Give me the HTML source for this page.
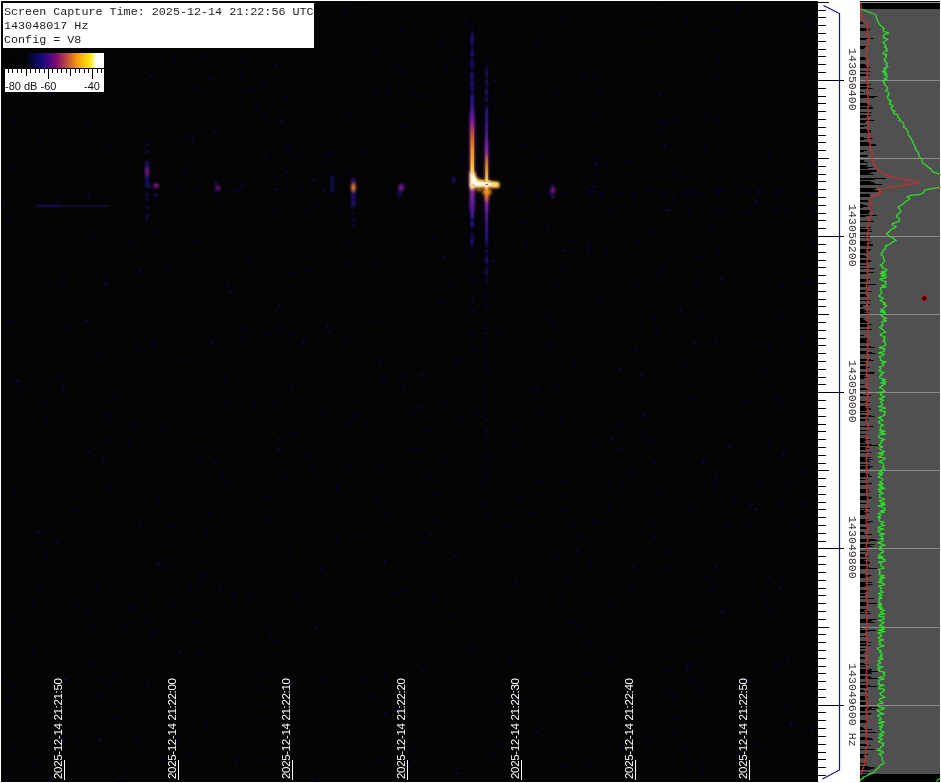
<!DOCTYPE html>
<html><head><meta charset="utf-8"><title>Spectrum capture</title>
<style>
html,body{margin:0;padding:0;background:#fff;}
#root{position:relative;width:941px;height:783px;overflow:hidden;background:#fff;}
#gfx{position:absolute;left:0;top:0;}
.hdr{position:absolute;left:3px;top:3px;width:311px;height:45px;background:#fff;color:#1c1c1c;
 font-family:"Liberation Mono",monospace;font-size:11px;line-height:14px;white-space:pre;}
.hdr div{position:absolute;left:1.3px;height:14px;transform-origin:0 0;transform:scaleX(1.066);}
.sc{position:absolute;font-family:"Liberation Sans",sans-serif;font-size:11px;line-height:11px;color:#111;white-space:pre;}
.fl{position:absolute;font-family:"Liberation Mono",monospace;font-size:11.5px;line-height:12px;color:#3a3236;white-space:pre;
 transform-origin:0 0;transform:rotate(90deg) scaleX(1.01);}
.tl{position:absolute;font-family:"Liberation Sans",sans-serif;font-size:11.5px;line-height:12px;color:#fff;white-space:pre;
 transform-origin:0 0;transform:rotate(-90deg);letter-spacing:-0.33px;}
</style></head><body><div id="root">

<svg id="gfx" width="941" height="783" viewBox="0 0 941 783">
<defs>
<linearGradient id="pal" x1="0" y1="0" x2="1" y2="0">
<stop offset="0" stop-color="#030303"/><stop offset="0.21" stop-color="#040407"/><stop offset="0.35" stop-color="#0c0a70"/>
<stop offset="0.43" stop-color="#3a0880"/><stop offset="0.52" stop-color="#820a72"/><stop offset="0.63" stop-color="#c0503a"/>
<stop offset="0.73" stop-color="#fb9a0c"/><stop offset="0.84" stop-color="#ffe00c"/><stop offset="0.885" stop-color="#ffee60"/><stop offset="0.92" stop-color="#ffffff"/><stop offset="1" stop-color="#ffffff"/>
</linearGradient>
<filter id="b0" x="-50%" y="-50%" width="200%" height="200%"><feGaussianBlur stdDeviation="0.8"/></filter>
<filter id="b1" x="-50%" y="-50%" width="200%" height="200%"><feGaussianBlur stdDeviation="0.8"/></filter>
<filter id="b2" x="-100%" y="-100%" width="300%" height="300%"><feGaussianBlur stdDeviation="1.5"/></filter>
<filter id="b3" x="-150%" y="-10%" width="400%" height="120%"><feGaussianBlur stdDeviation="1.3 2"/></filter>
<filter id="b4" x="-150%" y="-10%" width="400%" height="120%"><feGaussianBlur stdDeviation="0.7 1.5"/></filter>
<filter id="b5" x="-50%" y="-50%" width="200%" height="200%"><feGaussianBlur stdDeviation="0.55"/></filter>
<filter id="b6" x="-50%" y="-50%" width="200%" height="200%"><feGaussianBlur stdDeviation="0.9"/></filter>
<linearGradient id="l1" x1="0" y1="26" x2="0" y2="250" gradientUnits="userSpaceOnUse"><stop offset="0.0000" stop-color="#141060" stop-opacity="0"/><stop offset="0.0357" stop-color="#141060" stop-opacity="0.9"/><stop offset="0.3304" stop-color="#1c1278"/><stop offset="0.3839" stop-color="#4a1490"/><stop offset="0.4375" stop-color="#8a2490"/><stop offset="0.4821" stop-color="#c8502c"/><stop offset="0.5536" stop-color="#f09020"/><stop offset="0.6205" stop-color="#ffb428"/><stop offset="0.6518" stop-color="#ffe070"/><stop offset="0.6696" stop-color="#ffffff"/><stop offset="0.7188" stop-color="#ffffff"/><stop offset="0.7299" stop-color="#8a2490"/><stop offset="0.7946" stop-color="#5a1a98"/><stop offset="0.8661" stop-color="#241280"/><stop offset="0.9688" stop-color="#141060" stop-opacity="0.9"/><stop offset="1.0000" stop-color="#141060" stop-opacity="0"/></linearGradient>
<linearGradient id="l2" x1="0" y1="60" x2="0" y2="286" gradientUnits="userSpaceOnUse"><stop offset="0.0000" stop-color="#141060" stop-opacity="0"/><stop offset="0.0442" stop-color="#141060" stop-opacity="0.8"/><stop offset="0.2655" stop-color="#2a1286"/><stop offset="0.3540" stop-color="#5a1a98"/><stop offset="0.4071" stop-color="#8a2490"/><stop offset="0.4469" stop-color="#d06a24"/><stop offset="0.4956" stop-color="#f59a20"/><stop offset="0.5310" stop-color="#ffd050"/><stop offset="0.5487" stop-color="#ffffff"/><stop offset="0.5619" stop-color="#ffffff"/><stop offset="0.5752" stop-color="#ffa020"/><stop offset="0.6062" stop-color="#e07818"/><stop offset="0.6283" stop-color="#8a2490"/><stop offset="0.6858" stop-color="#4a1490"/><stop offset="0.7743" stop-color="#1c1278"/><stop offset="0.9646" stop-color="#141060" stop-opacity="0.8"/><stop offset="1.0000" stop-color="#141060" stop-opacity="0"/></linearGradient>
</defs>
<rect x="0" y="0" width="941" height="783" fill="#fff"/>
<rect x="1" y="1" width="817" height="781" fill="#040405"/>
<g fill="#0e0b66" filter="url(#b0)"><rect x="702" y="106" width="2" height="1" opacity="0.22"/><rect x="555" y="519" width="2" height="2" opacity="0.22"/><rect x="574" y="362" width="2" height="2" opacity="0.79"/><rect x="82" y="229" width="2" height="1" opacity="0.66"/><rect x="36" y="34" width="2" height="2" opacity="0.33"/><rect x="249" y="299" width="1" height="2" opacity="0.61"/><rect x="768" y="442" width="2" height="2" opacity="0.67"/><rect x="210" y="341" width="3" height="2" opacity="0.81"/><rect x="94" y="596" width="2" height="1" opacity="0.77"/><rect x="478" y="544" width="2" height="1" opacity="0.22"/><rect x="262" y="607" width="2" height="1" opacity="0.47"/><rect x="607" y="779" width="3" height="1" opacity="0.38"/><rect x="76" y="738" width="2" height="2" opacity="0.80"/><rect x="565" y="577" width="2" height="1" opacity="0.64"/><rect x="170" y="526" width="2" height="2" opacity="0.70"/><rect x="38" y="549" width="3" height="2" opacity="0.31"/><rect x="136" y="610" width="2" height="2" opacity="0.36"/><rect x="51" y="281" width="2" height="1" opacity="0.33"/><rect x="255" y="109" width="2" height="2" opacity="0.35"/><rect x="199" y="403" width="2" height="1" opacity="0.81"/><rect x="288" y="236" width="2" height="1" opacity="0.42"/><rect x="665" y="429" width="2" height="1" opacity="0.59"/><rect x="377" y="598" width="2" height="1" opacity="0.65"/><rect x="13" y="381" width="1" height="1" opacity="0.78"/><rect x="250" y="89" width="2" height="2" opacity="0.83"/><rect x="134" y="349" width="3" height="2" opacity="0.39"/><rect x="456" y="38" width="2" height="2" opacity="0.25"/><rect x="585" y="765" width="3" height="2" opacity="0.27"/><rect x="400" y="340" width="2" height="2" opacity="0.21"/><rect x="750" y="504" width="3" height="2" opacity="0.62"/><rect x="66" y="584" width="1" height="2" opacity="0.75"/><rect x="244" y="147" width="3" height="1" opacity="0.27"/><rect x="587" y="244" width="3" height="2" opacity="0.45"/><rect x="529" y="280" width="2" height="2" opacity="0.29"/><rect x="750" y="654" width="2" height="1" opacity="0.24"/><rect x="90" y="627" width="2" height="1" opacity="0.81"/><rect x="404" y="391" width="2" height="2" opacity="0.59"/><rect x="512" y="113" width="2" height="1" opacity="0.29"/><rect x="520" y="315" width="1" height="2" opacity="0.51"/><rect x="180" y="292" width="1" height="2" opacity="0.29"/><rect x="61" y="46" width="2" height="2" opacity="0.24"/><rect x="10" y="746" width="2" height="1" opacity="0.45"/><rect x="6" y="628" width="2" height="1" opacity="0.50"/><rect x="444" y="405" width="2" height="1" opacity="0.83"/><rect x="784" y="485" width="1" height="2" opacity="0.60"/><rect x="244" y="447" width="2" height="2" opacity="0.63"/><rect x="114" y="675" width="3" height="1" opacity="0.75"/><rect x="184" y="578" width="1" height="1" opacity="0.63"/><rect x="305" y="454" width="2" height="2" opacity="0.54"/><rect x="462" y="311" width="1" height="1" opacity="0.32"/><rect x="726" y="429" width="1" height="1" opacity="0.76"/><rect x="209" y="77" width="3" height="2" opacity="0.66"/><rect x="187" y="359" width="3" height="1" opacity="0.68"/><rect x="741" y="443" width="2" height="1" opacity="0.72"/><rect x="112" y="394" width="3" height="1" opacity="0.61"/><rect x="783" y="403" width="2" height="2" opacity="0.55"/><rect x="789" y="152" width="2" height="1" opacity="0.29"/><rect x="633" y="48" width="2" height="1" opacity="0.44"/><rect x="15" y="465" width="2" height="2" opacity="0.39"/><rect x="577" y="334" width="1" height="1" opacity="0.57"/><rect x="748" y="680" width="2" height="2" opacity="0.68"/><rect x="280" y="596" width="1" height="2" opacity="0.28"/><rect x="306" y="576" width="2" height="2" opacity="0.23"/><rect x="493" y="80" width="3" height="2" opacity="0.72"/><rect x="95" y="722" width="2" height="2" opacity="0.43"/><rect x="566" y="20" width="3" height="2" opacity="0.27"/><rect x="20" y="89" width="2" height="1" opacity="0.30"/><rect x="759" y="682" width="2" height="1" opacity="0.58"/><rect x="206" y="778" width="2" height="2" opacity="0.21"/><rect x="281" y="120" width="3" height="2" opacity="0.77"/><rect x="653" y="31" width="2" height="2" opacity="0.75"/><rect x="789" y="541" width="2" height="2" opacity="0.35"/><rect x="781" y="405" width="2" height="2" opacity="0.54"/><rect x="256" y="105" width="3" height="1" opacity="0.34"/><rect x="668" y="568" width="2" height="2" opacity="0.45"/><rect x="290" y="8" width="3" height="2" opacity="0.42"/><rect x="20" y="360" width="3" height="1" opacity="0.61"/><rect x="593" y="115" width="2" height="2" opacity="0.24"/><rect x="808" y="280" width="3" height="1" opacity="0.84"/><rect x="31" y="439" width="1" height="1" opacity="0.70"/><rect x="517" y="496" width="2" height="2" opacity="0.72"/><rect x="196" y="622" width="2" height="1" opacity="0.40"/><rect x="623" y="578" width="3" height="1" opacity="0.43"/><rect x="450" y="318" width="1" height="2" opacity="0.64"/><rect x="721" y="611" width="3" height="2" opacity="0.78"/><rect x="660" y="777" width="2" height="1" opacity="0.33"/><rect x="725" y="525" width="2" height="2" opacity="0.46"/><rect x="630" y="725" width="3" height="1" opacity="0.29"/><rect x="588" y="199" width="3" height="2" opacity="0.25"/><rect x="157" y="722" width="3" height="1" opacity="0.40"/><rect x="290" y="367" width="2" height="1" opacity="0.75"/><rect x="262" y="139" width="2" height="1" opacity="0.69"/><rect x="512" y="187" width="1" height="1" opacity="0.23"/><rect x="367" y="697" width="2" height="1" opacity="0.33"/><rect x="599" y="751" width="3" height="1" opacity="0.25"/><rect x="660" y="683" width="2" height="1" opacity="0.20"/><rect x="223" y="502" width="1" height="2" opacity="0.80"/><rect x="175" y="257" width="1" height="2" opacity="0.46"/><rect x="554" y="265" width="1" height="2" opacity="0.72"/><rect x="74" y="479" width="2" height="2" opacity="0.37"/><rect x="379" y="14" width="2" height="2" opacity="0.24"/><rect x="502" y="566" width="2" height="1" opacity="0.26"/><rect x="130" y="114" width="1" height="2" opacity="0.73"/><rect x="347" y="422" width="3" height="1" opacity="0.63"/><rect x="491" y="260" width="3" height="2" opacity="0.73"/><rect x="391" y="28" width="2" height="2" opacity="0.56"/><rect x="296" y="415" width="2" height="1" opacity="0.36"/><rect x="456" y="81" width="2" height="1" opacity="0.84"/><rect x="188" y="591" width="1" height="1" opacity="0.61"/><rect x="102" y="425" width="2" height="1" opacity="0.37"/><rect x="495" y="576" width="2" height="1" opacity="0.54"/><rect x="288" y="554" width="2" height="2" opacity="0.34"/><rect x="744" y="703" width="2" height="2" opacity="0.34"/><rect x="644" y="24" width="1" height="1" opacity="0.72"/><rect x="745" y="527" width="2" height="1" opacity="0.35"/><rect x="308" y="708" width="2" height="1" opacity="0.22"/><rect x="20" y="554" width="2" height="1" opacity="0.43"/><rect x="268" y="334" width="2" height="2" opacity="0.77"/><rect x="408" y="766" width="2" height="2" opacity="0.76"/><rect x="709" y="211" width="2" height="2" opacity="0.38"/><rect x="272" y="380" width="2" height="1" opacity="0.41"/><rect x="499" y="746" width="2" height="1" opacity="0.77"/><rect x="173" y="690" width="2" height="1" opacity="0.71"/><rect x="704" y="145" width="2" height="2" opacity="0.65"/><rect x="657" y="121" width="1" height="1" opacity="0.79"/><rect x="125" y="575" width="1" height="1" opacity="0.50"/><rect x="326" y="325" width="2" height="2" opacity="0.84"/><rect x="30" y="185" width="1" height="1" opacity="0.29"/><rect x="486" y="450" width="1" height="1" opacity="0.23"/><rect x="729" y="53" width="1" height="1" opacity="0.82"/><rect x="791" y="411" width="1" height="1" opacity="0.35"/><rect x="442" y="495" width="3" height="1" opacity="0.54"/><rect x="685" y="747" width="1" height="2" opacity="0.83"/><rect x="696" y="758" width="2" height="1" opacity="0.38"/><rect x="147" y="209" width="1" height="1" opacity="0.33"/><rect x="42" y="616" width="2" height="2" opacity="0.21"/><rect x="562" y="510" width="3" height="2" opacity="0.56"/><rect x="564" y="766" width="2" height="2" opacity="0.47"/><rect x="441" y="301" width="2" height="2" opacity="0.69"/><rect x="719" y="628" width="1" height="1" opacity="0.60"/><rect x="755" y="201" width="3" height="2" opacity="0.84"/><rect x="673" y="518" width="1" height="1" opacity="0.79"/><rect x="43" y="542" width="2" height="2" opacity="0.56"/><rect x="259" y="758" width="1" height="2" opacity="0.69"/><rect x="696" y="399" width="3" height="2" opacity="0.35"/><rect x="514" y="581" width="2" height="2" opacity="0.66"/><rect x="323" y="412" width="3" height="2" opacity="0.25"/><rect x="650" y="519" width="3" height="2" opacity="0.37"/><rect x="686" y="669" width="2" height="2" opacity="0.57"/><rect x="815" y="54" width="3" height="2" opacity="0.54"/><rect x="431" y="635" width="2" height="1" opacity="0.30"/><rect x="540" y="141" width="1" height="2" opacity="0.45"/><rect x="679" y="638" width="1" height="2" opacity="0.30"/><rect x="207" y="83" width="2" height="2" opacity="0.49"/><rect x="74" y="310" width="2" height="1" opacity="0.49"/><rect x="391" y="623" width="3" height="1" opacity="0.20"/><rect x="109" y="383" width="2" height="2" opacity="0.54"/><rect x="654" y="199" width="3" height="1" opacity="0.20"/><rect x="214" y="462" width="2" height="2" opacity="0.80"/><rect x="211" y="209" width="2" height="1" opacity="0.54"/><rect x="404" y="72" width="2" height="2" opacity="0.82"/><rect x="239" y="610" width="1" height="2" opacity="0.44"/><rect x="37" y="588" width="2" height="2" opacity="0.62"/><rect x="661" y="277" width="2" height="1" opacity="0.80"/><rect x="159" y="758" width="3" height="2" opacity="0.24"/><rect x="168" y="671" width="1" height="2" opacity="0.45"/><rect x="430" y="389" width="1" height="1" opacity="0.59"/><rect x="379" y="362" width="2" height="2" opacity="0.85"/><rect x="146" y="54" width="2" height="2" opacity="0.29"/><rect x="614" y="10" width="2" height="1" opacity="0.46"/><rect x="36" y="531" width="3" height="2" opacity="0.70"/><rect x="628" y="95" width="2" height="1" opacity="0.57"/><rect x="16" y="389" width="2" height="2" opacity="0.24"/><rect x="556" y="555" width="2" height="1" opacity="0.56"/><rect x="610" y="658" width="2" height="2" opacity="0.73"/><rect x="711" y="116" width="2" height="1" opacity="0.54"/><rect x="8" y="771" width="2" height="2" opacity="0.26"/><rect x="315" y="519" width="2" height="2" opacity="0.53"/><rect x="344" y="43" width="2" height="1" opacity="0.76"/><rect x="654" y="669" width="2" height="2" opacity="0.33"/><rect x="45" y="420" width="2" height="2" opacity="0.63"/><rect x="579" y="113" width="2" height="1" opacity="0.50"/><rect x="577" y="519" width="2" height="1" opacity="0.55"/><rect x="335" y="442" width="2" height="1" opacity="0.38"/><rect x="649" y="230" width="2" height="2" opacity="0.46"/><rect x="594" y="161" width="2" height="1" opacity="0.32"/><rect x="700" y="100" width="2" height="1" opacity="0.73"/><rect x="407" y="14" width="3" height="1" opacity="0.52"/><rect x="550" y="527" width="2" height="1" opacity="0.55"/><rect x="132" y="607" width="2" height="1" opacity="0.50"/><rect x="167" y="74" width="1" height="2" opacity="0.35"/><rect x="680" y="552" width="2" height="2" opacity="0.30"/><rect x="49" y="544" width="1" height="1" opacity="0.74"/><rect x="241" y="184" width="3" height="2" opacity="0.66"/><rect x="587" y="244" width="2" height="2" opacity="0.56"/><rect x="177" y="738" width="2" height="2" opacity="0.83"/><rect x="269" y="124" width="2" height="1" opacity="0.63"/><rect x="567" y="157" width="2" height="1" opacity="0.48"/><rect x="554" y="92" width="2" height="1" opacity="0.63"/><rect x="174" y="513" width="3" height="1" opacity="0.39"/><rect x="286" y="586" width="2" height="1" opacity="0.33"/><rect x="230" y="238" width="3" height="1" opacity="0.33"/><rect x="385" y="600" width="2" height="2" opacity="0.22"/><rect x="489" y="755" width="2" height="1" opacity="0.81"/><rect x="536" y="42" width="2" height="2" opacity="0.49"/><rect x="204" y="580" width="2" height="1" opacity="0.71"/><rect x="245" y="57" width="3" height="2" opacity="0.26"/><rect x="451" y="615" width="3" height="2" opacity="0.50"/><rect x="30" y="402" width="1" height="2" opacity="0.62"/><rect x="110" y="452" width="2" height="1" opacity="0.44"/><rect x="541" y="130" width="2" height="1" opacity="0.42"/><rect x="687" y="682" width="2" height="2" opacity="0.30"/><rect x="79" y="686" width="1" height="1" opacity="0.52"/><rect x="438" y="94" width="2" height="1" opacity="0.31"/><rect x="438" y="397" width="2" height="1" opacity="0.38"/><rect x="454" y="771" width="2" height="1" opacity="0.78"/><rect x="15" y="736" width="2" height="1" opacity="0.65"/><rect x="189" y="586" width="2" height="2" opacity="0.85"/><rect x="347" y="488" width="1" height="2" opacity="0.57"/><rect x="101" y="519" width="2" height="1" opacity="0.36"/><rect x="632" y="402" width="1" height="1" opacity="0.25"/><rect x="277" y="79" width="2" height="1" opacity="0.73"/><rect x="281" y="633" width="2" height="1" opacity="0.21"/><rect x="767" y="323" width="2" height="1" opacity="0.26"/><rect x="202" y="573" width="2" height="1" opacity="0.72"/><rect x="628" y="161" width="2" height="2" opacity="0.66"/><rect x="57" y="5" width="2" height="1" opacity="0.52"/><rect x="636" y="709" width="3" height="1" opacity="0.33"/><rect x="511" y="660" width="2" height="1" opacity="0.62"/><rect x="792" y="456" width="2" height="2" opacity="0.29"/><rect x="676" y="731" width="1" height="2" opacity="0.74"/><rect x="654" y="462" width="2" height="2" opacity="0.74"/><rect x="640" y="680" width="2" height="1" opacity="0.24"/><rect x="639" y="626" width="2" height="1" opacity="0.33"/><rect x="375" y="187" width="2" height="1" opacity="0.45"/><rect x="639" y="620" width="2" height="2" opacity="0.46"/><rect x="74" y="510" width="2" height="2" opacity="0.72"/><rect x="7" y="383" width="1" height="1" opacity="0.77"/><rect x="389" y="322" width="2" height="2" opacity="0.29"/><rect x="446" y="68" width="2" height="2" opacity="0.60"/><rect x="240" y="71" width="2" height="1" opacity="0.66"/><rect x="362" y="517" width="2" height="1" opacity="0.34"/><rect x="512" y="295" width="2" height="2" opacity="0.38"/><rect x="781" y="285" width="2" height="2" opacity="0.78"/><rect x="499" y="698" width="2" height="2" opacity="0.52"/><rect x="779" y="397" width="3" height="1" opacity="0.76"/><rect x="789" y="307" width="1" height="1" opacity="0.75"/><rect x="87" y="194" width="3" height="2" opacity="0.68"/><rect x="552" y="768" width="3" height="2" opacity="0.29"/><rect x="615" y="200" width="2" height="1" opacity="0.53"/><rect x="272" y="210" width="2" height="2" opacity="0.40"/><rect x="579" y="536" width="3" height="1" opacity="0.79"/><rect x="407" y="286" width="1" height="1" opacity="0.77"/><rect x="724" y="96" width="2" height="2" opacity="0.40"/><rect x="419" y="121" width="3" height="2" opacity="0.22"/><rect x="267" y="109" width="2" height="1" opacity="0.32"/><rect x="748" y="398" width="2" height="1" opacity="0.69"/><rect x="524" y="221" width="2" height="2" opacity="0.70"/><rect x="24" y="429" width="2" height="1" opacity="0.72"/><rect x="552" y="299" width="2" height="2" opacity="0.41"/><rect x="680" y="388" width="1" height="2" opacity="0.78"/><rect x="166" y="630" width="1" height="1" opacity="0.40"/><rect x="426" y="532" width="1" height="2" opacity="0.83"/><rect x="634" y="283" width="2" height="2" opacity="0.40"/><rect x="769" y="156" width="2" height="2" opacity="0.46"/><rect x="556" y="284" width="2" height="2" opacity="0.72"/><rect x="387" y="90" width="3" height="2" opacity="0.53"/><rect x="335" y="127" width="2" height="1" opacity="0.30"/><rect x="618" y="368" width="3" height="2" opacity="0.69"/><rect x="227" y="285" width="2" height="2" opacity="0.75"/><rect x="101" y="352" width="1" height="1" opacity="0.55"/><rect x="570" y="240" width="3" height="2" opacity="0.37"/><rect x="201" y="57" width="3" height="1" opacity="0.69"/><rect x="554" y="324" width="1" height="2" opacity="0.31"/><rect x="146" y="565" width="1" height="2" opacity="0.46"/><rect x="767" y="580" width="2" height="2" opacity="0.46"/><rect x="657" y="275" width="2" height="1" opacity="0.55"/><rect x="426" y="523" width="2" height="1" opacity="0.34"/><rect x="557" y="721" width="1" height="1" opacity="0.75"/><rect x="545" y="452" width="2" height="1" opacity="0.57"/><rect x="225" y="659" width="2" height="1" opacity="0.34"/><rect x="693" y="188" width="1" height="2" opacity="0.78"/><rect x="606" y="641" width="2" height="2" opacity="0.29"/><rect x="575" y="550" width="3" height="2" opacity="0.66"/><rect x="629" y="473" width="3" height="2" opacity="0.59"/><rect x="737" y="243" width="2" height="1" opacity="0.43"/><rect x="571" y="59" width="2" height="1" opacity="0.20"/><rect x="514" y="111" width="2" height="1" opacity="0.84"/><rect x="482" y="466" width="1" height="1" opacity="0.55"/><rect x="383" y="379" width="2" height="2" opacity="0.83"/><rect x="434" y="182" width="3" height="1" opacity="0.38"/><rect x="794" y="452" width="1" height="1" opacity="0.71"/><rect x="26" y="395" width="2" height="2" opacity="0.24"/><rect x="515" y="566" width="3" height="1" opacity="0.46"/><rect x="419" y="460" width="2" height="1" opacity="0.72"/><rect x="784" y="259" width="2" height="1" opacity="0.62"/><rect x="470" y="338" width="3" height="2" opacity="0.32"/><rect x="503" y="90" width="2" height="2" opacity="0.69"/><rect x="65" y="700" width="1" height="2" opacity="0.71"/><rect x="645" y="580" width="2" height="1" opacity="0.56"/><rect x="572" y="759" width="1" height="1" opacity="0.24"/><rect x="170" y="13" width="3" height="2" opacity="0.56"/><rect x="513" y="442" width="2" height="2" opacity="0.40"/><rect x="39" y="139" width="2" height="2" opacity="0.78"/><rect x="656" y="357" width="1" height="2" opacity="0.27"/><rect x="128" y="607" width="2" height="2" opacity="0.84"/><rect x="743" y="621" width="2" height="1" opacity="0.75"/><rect x="432" y="198" width="2" height="1" opacity="0.43"/><rect x="536" y="731" width="2" height="2" opacity="0.81"/><rect x="799" y="342" width="2" height="1" opacity="0.73"/><rect x="686" y="107" width="1" height="1" opacity="0.34"/><rect x="478" y="297" width="1" height="1" opacity="0.50"/><rect x="38" y="694" width="3" height="1" opacity="0.76"/><rect x="278" y="438" width="2" height="2" opacity="0.70"/><rect x="737" y="9" width="2" height="2" opacity="0.45"/><rect x="87" y="462" width="2" height="1" opacity="0.49"/><rect x="468" y="718" width="2" height="1" opacity="0.57"/><rect x="587" y="673" width="2" height="2" opacity="0.62"/><rect x="703" y="772" width="2" height="2" opacity="0.59"/><rect x="99" y="390" width="2" height="1" opacity="0.65"/><rect x="653" y="694" width="1" height="2" opacity="0.57"/><rect x="608" y="177" width="1" height="1" opacity="0.26"/><rect x="796" y="627" width="1" height="2" opacity="0.23"/><rect x="198" y="726" width="2" height="1" opacity="0.80"/><rect x="522" y="717" width="2" height="1" opacity="0.30"/><rect x="18" y="591" width="1" height="1" opacity="0.32"/><rect x="658" y="130" width="3" height="2" opacity="0.27"/><rect x="642" y="694" width="1" height="1" opacity="0.75"/><rect x="454" y="641" width="3" height="1" opacity="0.66"/><rect x="540" y="481" width="2" height="2" opacity="0.64"/><rect x="458" y="165" width="2" height="2" opacity="0.34"/><rect x="578" y="575" width="2" height="1" opacity="0.60"/><rect x="73" y="407" width="1" height="1" opacity="0.67"/><rect x="693" y="662" width="1" height="1" opacity="0.44"/><rect x="249" y="595" width="2" height="2" opacity="0.59"/><rect x="798" y="600" width="1" height="1" opacity="0.25"/><rect x="95" y="541" width="3" height="1" opacity="0.54"/><rect x="373" y="320" width="3" height="1" opacity="0.80"/><rect x="598" y="622" width="1" height="1" opacity="0.67"/><rect x="28" y="532" width="2" height="1" opacity="0.32"/><rect x="769" y="346" width="2" height="2" opacity="0.71"/><rect x="690" y="25" width="2" height="1" opacity="0.31"/><rect x="135" y="739" width="2" height="2" opacity="0.38"/><rect x="206" y="323" width="1" height="2" opacity="0.35"/><rect x="723" y="719" width="2" height="1" opacity="0.70"/><rect x="632" y="694" width="1" height="1" opacity="0.27"/><rect x="673" y="247" width="2" height="2" opacity="0.24"/><rect x="102" y="359" width="2" height="1" opacity="0.62"/><rect x="440" y="732" width="2" height="1" opacity="0.62"/><rect x="180" y="590" width="1" height="2" opacity="0.48"/><rect x="99" y="739" width="3" height="2" opacity="0.60"/><rect x="138" y="740" width="2" height="2" opacity="0.36"/><rect x="212" y="25" width="2" height="2" opacity="0.60"/><rect x="536" y="578" width="2" height="1" opacity="0.59"/><rect x="567" y="239" width="1" height="1" opacity="0.55"/><rect x="63" y="61" width="3" height="1" opacity="0.67"/><rect x="530" y="399" width="2" height="2" opacity="0.32"/><rect x="84" y="239" width="2" height="1" opacity="0.49"/><rect x="594" y="77" width="2" height="2" opacity="0.41"/><rect x="170" y="304" width="2" height="1" opacity="0.76"/><rect x="655" y="524" width="2" height="1" opacity="0.75"/><rect x="62" y="73" width="3" height="2" opacity="0.63"/><rect x="150" y="115" width="1" height="1" opacity="0.45"/><rect x="533" y="446" width="2" height="1" opacity="0.24"/><rect x="15" y="665" width="2" height="2" opacity="0.44"/><rect x="590" y="111" width="2" height="2" opacity="0.44"/><rect x="428" y="90" width="2" height="1" opacity="0.39"/><rect x="312" y="597" width="2" height="1" opacity="0.78"/><rect x="622" y="666" width="2" height="2" opacity="0.37"/><rect x="9" y="80" width="2" height="2" opacity="0.35"/><rect x="27" y="344" width="1" height="1" opacity="0.50"/><rect x="581" y="76" width="1" height="2" opacity="0.51"/><rect x="144" y="182" width="2" height="1" opacity="0.28"/><rect x="58" y="284" width="2" height="1" opacity="0.81"/><rect x="453" y="59" width="2" height="2" opacity="0.68"/><rect x="460" y="679" width="2" height="1" opacity="0.24"/><rect x="354" y="46" width="3" height="1" opacity="0.53"/><rect x="260" y="82" width="2" height="2" opacity="0.50"/><rect x="771" y="613" width="2" height="1" opacity="0.72"/><rect x="515" y="79" width="2" height="2" opacity="0.24"/><rect x="574" y="372" width="2" height="1" opacity="0.53"/><rect x="513" y="634" width="1" height="2" opacity="0.65"/><rect x="29" y="507" width="2" height="1" opacity="0.62"/><rect x="121" y="627" width="2" height="1" opacity="0.76"/><rect x="302" y="704" width="2" height="1" opacity="0.21"/><rect x="375" y="565" width="2" height="1" opacity="0.75"/><rect x="235" y="761" width="2" height="2" opacity="0.69"/><rect x="477" y="733" width="2" height="1" opacity="0.64"/><rect x="13" y="740" width="2" height="1" opacity="0.51"/><rect x="418" y="740" width="2" height="1" opacity="0.60"/><rect x="179" y="651" width="2" height="2" opacity="0.85"/><rect x="374" y="179" width="2" height="1" opacity="0.46"/><rect x="282" y="523" width="1" height="2" opacity="0.70"/><rect x="197" y="653" width="2" height="2" opacity="0.59"/><rect x="389" y="429" width="2" height="1" opacity="0.37"/><rect x="459" y="216" width="2" height="1" opacity="0.79"/><rect x="814" y="108" width="2" height="1" opacity="0.31"/><rect x="346" y="65" width="2" height="2" opacity="0.36"/><rect x="466" y="176" width="2" height="2" opacity="0.83"/><rect x="581" y="77" width="2" height="1" opacity="0.83"/><rect x="737" y="58" width="2" height="1" opacity="0.47"/><rect x="433" y="663" width="3" height="1" opacity="0.49"/><rect x="409" y="415" width="2" height="1" opacity="0.48"/><rect x="484" y="200" width="2" height="1" opacity="0.76"/><rect x="780" y="503" width="2" height="2" opacity="0.82"/><rect x="212" y="642" width="1" height="2" opacity="0.34"/><rect x="269" y="718" width="2" height="2" opacity="0.42"/><rect x="621" y="746" width="2" height="2" opacity="0.82"/><rect x="641" y="184" width="2" height="1" opacity="0.82"/><rect x="171" y="321" width="2" height="1" opacity="0.44"/><rect x="578" y="298" width="2" height="2" opacity="0.28"/><rect x="184" y="170" width="2" height="1" opacity="0.22"/><rect x="113" y="319" width="2" height="1" opacity="0.51"/><rect x="372" y="261" width="3" height="2" opacity="0.42"/><rect x="619" y="247" width="2" height="1" opacity="0.64"/><rect x="637" y="309" width="1" height="2" opacity="0.74"/><rect x="524" y="496" width="3" height="1" opacity="0.44"/><rect x="693" y="507" width="2" height="1" opacity="0.59"/><rect x="693" y="683" width="3" height="1" opacity="0.33"/><rect x="15" y="419" width="3" height="2" opacity="0.22"/><rect x="651" y="653" width="1" height="1" opacity="0.20"/><rect x="190" y="209" width="2" height="1" opacity="0.22"/><rect x="70" y="72" width="2" height="1" opacity="0.51"/><rect x="63" y="274" width="2" height="2" opacity="0.69"/><rect x="713" y="262" width="1" height="2" opacity="0.31"/><rect x="77" y="488" width="2" height="1" opacity="0.71"/><rect x="595" y="268" width="2" height="1" opacity="0.32"/><rect x="757" y="438" width="1" height="1" opacity="0.75"/><rect x="346" y="232" width="1" height="1" opacity="0.40"/><rect x="62" y="370" width="1" height="1" opacity="0.32"/><rect x="578" y="628" width="2" height="1" opacity="0.74"/><rect x="386" y="341" width="1" height="1" opacity="0.81"/><rect x="178" y="656" width="2" height="1" opacity="0.69"/><rect x="410" y="408" width="2" height="1" opacity="0.22"/><rect x="591" y="175" width="2" height="1" opacity="0.62"/><rect x="564" y="481" width="2" height="1" opacity="0.84"/><rect x="811" y="701" width="2" height="1" opacity="0.24"/><rect x="379" y="266" width="2" height="2" opacity="0.41"/><rect x="589" y="46" width="3" height="2" opacity="0.26"/><rect x="43" y="402" width="2" height="1" opacity="0.81"/><rect x="715" y="362" width="2" height="2" opacity="0.28"/><rect x="415" y="408" width="2" height="2" opacity="0.54"/><rect x="633" y="86" width="1" height="2" opacity="0.48"/><rect x="57" y="627" width="3" height="1" opacity="0.49"/><rect x="695" y="732" width="2" height="2" opacity="0.55"/><rect x="636" y="566" width="2" height="1" opacity="0.27"/><rect x="373" y="498" width="2" height="1" opacity="0.22"/><rect x="800" y="710" width="2" height="1" opacity="0.50"/><rect x="506" y="236" width="1" height="2" opacity="0.48"/><rect x="73" y="309" width="1" height="1" opacity="0.22"/><rect x="742" y="524" width="3" height="1" opacity="0.66"/><rect x="260" y="639" width="3" height="2" opacity="0.31"/><rect x="144" y="597" width="2" height="2" opacity="0.44"/><rect x="727" y="359" width="3" height="1" opacity="0.26"/><rect x="769" y="733" width="2" height="2" opacity="0.35"/><rect x="153" y="633" width="2" height="2" opacity="0.67"/><rect x="599" y="104" width="2" height="2" opacity="0.27"/><rect x="663" y="266" width="2" height="1" opacity="0.37"/><rect x="384" y="773" width="2" height="2" opacity="0.40"/><rect x="595" y="662" width="2" height="2" opacity="0.24"/><rect x="3" y="183" width="2" height="1" opacity="0.71"/><rect x="210" y="34" width="1" height="2" opacity="0.35"/><rect x="261" y="688" width="2" height="2" opacity="0.44"/><rect x="290" y="297" width="1" height="1" opacity="0.21"/><rect x="552" y="591" width="3" height="1" opacity="0.73"/><rect x="526" y="44" width="2" height="1" opacity="0.73"/><rect x="209" y="513" width="2" height="2" opacity="0.75"/><rect x="111" y="422" width="2" height="1" opacity="0.42"/><rect x="688" y="662" width="2" height="1" opacity="0.72"/><rect x="687" y="764" width="2" height="2" opacity="0.71"/><rect x="638" y="679" width="2" height="2" opacity="0.43"/><rect x="55" y="95" width="1" height="1" opacity="0.35"/><rect x="60" y="56" width="1" height="1" opacity="0.76"/><rect x="523" y="245" width="2" height="2" opacity="0.40"/><rect x="516" y="698" width="2" height="2" opacity="0.78"/><rect x="599" y="245" width="2" height="1" opacity="0.59"/><rect x="813" y="699" width="1" height="2" opacity="0.49"/><rect x="13" y="746" width="2" height="1" opacity="0.34"/><rect x="444" y="724" width="1" height="1" opacity="0.50"/><rect x="465" y="21" width="2" height="2" opacity="0.85"/><rect x="152" y="229" width="3" height="2" opacity="0.27"/><rect x="648" y="472" width="1" height="1" opacity="0.44"/><rect x="768" y="576" width="2" height="2" opacity="0.61"/><rect x="66" y="327" width="2" height="2" opacity="0.84"/><rect x="422" y="759" width="2" height="1" opacity="0.63"/><rect x="119" y="746" width="3" height="1" opacity="0.32"/><rect x="742" y="431" width="1" height="2" opacity="0.23"/><rect x="48" y="395" width="3" height="1" opacity="0.53"/><rect x="760" y="438" width="2" height="1" opacity="0.61"/><rect x="655" y="332" width="3" height="2" opacity="0.59"/><rect x="193" y="171" width="2" height="1" opacity="0.26"/><rect x="8" y="267" width="2" height="1" opacity="0.55"/><rect x="191" y="642" width="2" height="1" opacity="0.79"/><rect x="167" y="458" width="1" height="2" opacity="0.66"/><rect x="580" y="215" width="2" height="1" opacity="0.52"/><rect x="4" y="678" width="1" height="2" opacity="0.29"/><rect x="376" y="499" width="3" height="2" opacity="0.47"/><rect x="589" y="777" width="2" height="1" opacity="0.77"/><rect x="293" y="342" width="2" height="1" opacity="0.61"/><rect x="365" y="114" width="3" height="2" opacity="0.28"/><rect x="243" y="328" width="2" height="2" opacity="0.51"/><rect x="228" y="406" width="2" height="1" opacity="0.53"/><rect x="192" y="276" width="2" height="1" opacity="0.46"/><rect x="291" y="333" width="2" height="2" opacity="0.62"/><rect x="381" y="651" width="3" height="1" opacity="0.23"/><rect x="640" y="373" width="3" height="2" opacity="0.82"/><rect x="506" y="125" width="1" height="1" opacity="0.61"/><rect x="553" y="313" width="2" height="1" opacity="0.42"/><rect x="770" y="430" width="2" height="1" opacity="0.39"/><rect x="113" y="706" width="1" height="2" opacity="0.72"/><rect x="361" y="216" width="3" height="1" opacity="0.43"/><rect x="435" y="725" width="2" height="1" opacity="0.42"/><rect x="317" y="476" width="2" height="1" opacity="0.44"/><rect x="318" y="285" width="3" height="1" opacity="0.38"/><rect x="273" y="641" width="2" height="2" opacity="0.21"/><rect x="160" y="49" width="2" height="1" opacity="0.40"/><rect x="181" y="342" width="1" height="1" opacity="0.82"/><rect x="450" y="719" width="1" height="1" opacity="0.48"/><rect x="160" y="584" width="2" height="2" opacity="0.26"/><rect x="712" y="588" width="3" height="1" opacity="0.83"/><rect x="34" y="46" width="1" height="1" opacity="0.21"/><rect x="578" y="493" width="1" height="2" opacity="0.31"/><rect x="150" y="476" width="2" height="2" opacity="0.28"/><rect x="699" y="256" width="2" height="2" opacity="0.49"/><rect x="395" y="22" width="2" height="1" opacity="0.32"/><rect x="127" y="276" width="1" height="2" opacity="0.54"/><rect x="556" y="29" width="2" height="1" opacity="0.49"/><rect x="719" y="470" width="2" height="2" opacity="0.53"/><rect x="123" y="40" width="3" height="1" opacity="0.52"/><rect x="562" y="125" width="1" height="1" opacity="0.75"/><rect x="297" y="551" width="2" height="2" opacity="0.67"/><rect x="335" y="749" width="3" height="1" opacity="0.41"/><rect x="309" y="212" width="2" height="1" opacity="0.84"/><rect x="562" y="250" width="3" height="2" opacity="0.72"/><rect x="276" y="449" width="3" height="2" opacity="0.82"/><rect x="700" y="771" width="2" height="1" opacity="0.30"/><rect x="621" y="448" width="2" height="2" opacity="0.66"/><rect x="7" y="461" width="2" height="1" opacity="0.44"/><rect x="715" y="474" width="2" height="2" opacity="0.77"/><rect x="660" y="66" width="2" height="2" opacity="0.26"/><rect x="404" y="564" width="2" height="1" opacity="0.63"/><rect x="229" y="291" width="3" height="2" opacity="0.70"/><rect x="565" y="506" width="2" height="2" opacity="0.62"/><rect x="261" y="534" width="2" height="1" opacity="0.23"/><rect x="682" y="633" width="2" height="1" opacity="0.59"/><rect x="705" y="576" width="2" height="2" opacity="0.61"/><rect x="309" y="197" width="3" height="1" opacity="0.49"/><rect x="24" y="67" width="1" height="1" opacity="0.50"/><rect x="384" y="561" width="2" height="2" opacity="0.75"/><rect x="497" y="746" width="1" height="1" opacity="0.74"/><rect x="214" y="131" width="2" height="2" opacity="0.76"/><rect x="185" y="205" width="1" height="1" opacity="0.30"/><rect x="812" y="238" width="1" height="2" opacity="0.55"/><rect x="697" y="348" width="1" height="2" opacity="0.79"/><rect x="657" y="533" width="2" height="1" opacity="0.62"/><rect x="393" y="415" width="2" height="2" opacity="0.30"/><rect x="558" y="434" width="2" height="1" opacity="0.79"/><rect x="733" y="368" width="2" height="2" opacity="0.26"/><rect x="407" y="760" width="2" height="1" opacity="0.42"/><rect x="80" y="298" width="1" height="1" opacity="0.52"/><rect x="232" y="260" width="3" height="1" opacity="0.40"/><rect x="26" y="162" width="1" height="2" opacity="0.50"/><rect x="303" y="607" width="2" height="2" opacity="0.82"/><rect x="518" y="425" width="2" height="2" opacity="0.32"/><rect x="158" y="231" width="2" height="1" opacity="0.47"/><rect x="173" y="58" width="3" height="1" opacity="0.69"/><rect x="196" y="89" width="2" height="1" opacity="0.84"/><rect x="554" y="557" width="1" height="2" opacity="0.23"/><rect x="349" y="756" width="2" height="1" opacity="0.53"/><rect x="287" y="555" width="3" height="1" opacity="0.21"/><rect x="168" y="142" width="2" height="1" opacity="0.34"/><rect x="102" y="458" width="3" height="2" opacity="0.64"/><rect x="315" y="774" width="1" height="1" opacity="0.59"/><rect x="570" y="333" width="2" height="1" opacity="0.48"/><rect x="710" y="20" width="1" height="1" opacity="0.85"/><rect x="509" y="511" width="2" height="2" opacity="0.67"/><rect x="451" y="282" width="2" height="2" opacity="0.55"/><rect x="135" y="121" width="1" height="1" opacity="0.30"/><rect x="411" y="449" width="3" height="2" opacity="0.47"/><rect x="444" y="15" width="1" height="1" opacity="0.47"/><rect x="195" y="591" width="2" height="2" opacity="0.36"/><rect x="78" y="374" width="2" height="2" opacity="0.42"/><rect x="624" y="176" width="1" height="2" opacity="0.84"/><rect x="197" y="32" width="2" height="1" opacity="0.25"/><rect x="70" y="261" width="1" height="2" opacity="0.62"/><rect x="347" y="243" width="3" height="2" opacity="0.36"/><rect x="129" y="240" width="2" height="1" opacity="0.66"/><rect x="351" y="132" width="1" height="2" opacity="0.28"/><rect x="691" y="507" width="2" height="1" opacity="0.39"/><rect x="35" y="40" width="3" height="1" opacity="0.53"/><rect x="139" y="523" width="2" height="2" opacity="0.63"/><rect x="77" y="704" width="1" height="1" opacity="0.63"/><rect x="85" y="320" width="3" height="2" opacity="0.85"/><rect x="275" y="210" width="2" height="1" opacity="0.22"/><rect x="341" y="659" width="1" height="1" opacity="0.26"/><rect x="49" y="152" width="2" height="1" opacity="0.45"/><rect x="556" y="200" width="1" height="2" opacity="0.57"/><rect x="367" y="52" width="3" height="2" opacity="0.28"/><rect x="57" y="343" width="1" height="1" opacity="0.58"/><rect x="796" y="38" width="1" height="1" opacity="0.72"/><rect x="198" y="175" width="2" height="2" opacity="0.31"/><rect x="677" y="319" width="2" height="1" opacity="0.84"/><rect x="359" y="6" width="1" height="2" opacity="0.76"/><rect x="520" y="124" width="2" height="1" opacity="0.27"/><rect x="312" y="525" width="1" height="1" opacity="0.23"/><rect x="290" y="683" width="3" height="2" opacity="0.75"/><rect x="611" y="437" width="3" height="2" opacity="0.83"/><rect x="526" y="739" width="3" height="1" opacity="0.40"/><rect x="169" y="568" width="2" height="2" opacity="0.43"/><rect x="457" y="772" width="3" height="2" opacity="0.63"/><rect x="107" y="20" width="2" height="1" opacity="0.23"/><rect x="241" y="95" width="2" height="2" opacity="0.54"/><rect x="205" y="722" width="3" height="2" opacity="0.55"/><rect x="241" y="648" width="1" height="2" opacity="0.51"/><rect x="597" y="168" width="2" height="2" opacity="0.66"/><rect x="372" y="70" width="2" height="1" opacity="0.74"/><rect x="801" y="339" width="2" height="2" opacity="0.65"/><rect x="225" y="50" width="2" height="2" opacity="0.22"/><rect x="784" y="411" width="2" height="1" opacity="0.42"/><rect x="386" y="562" width="2" height="2" opacity="0.27"/><rect x="163" y="699" width="1" height="1" opacity="0.78"/><rect x="692" y="677" width="2" height="2" opacity="0.47"/><rect x="258" y="760" width="2" height="1" opacity="0.43"/><rect x="52" y="527" width="2" height="2" opacity="0.22"/><rect x="144" y="45" width="2" height="1" opacity="0.30"/><rect x="640" y="399" width="1" height="2" opacity="0.49"/><rect x="326" y="466" width="2" height="1" opacity="0.45"/><rect x="154" y="611" width="2" height="1" opacity="0.69"/><rect x="273" y="531" width="3" height="1" opacity="0.33"/><rect x="473" y="448" width="2" height="2" opacity="0.26"/><rect x="578" y="663" width="2" height="1" opacity="0.51"/><rect x="630" y="688" width="1" height="1" opacity="0.57"/><rect x="422" y="664" width="1" height="2" opacity="0.28"/><rect x="176" y="245" width="2" height="2" opacity="0.21"/><rect x="188" y="261" width="2" height="1" opacity="0.63"/><rect x="346" y="262" width="2" height="2" opacity="0.61"/><rect x="425" y="430" width="2" height="2" opacity="0.51"/><rect x="583" y="366" width="1" height="1" opacity="0.63"/><rect x="378" y="468" width="2" height="2" opacity="0.56"/><rect x="317" y="624" width="1" height="2" opacity="0.69"/><rect x="610" y="732" width="1" height="2" opacity="0.50"/><rect x="176" y="5" width="1" height="1" opacity="0.32"/><rect x="7" y="322" width="2" height="2" opacity="0.80"/><rect x="285" y="289" width="2" height="1" opacity="0.53"/><rect x="404" y="292" width="3" height="1" opacity="0.34"/><rect x="318" y="662" width="3" height="2" opacity="0.38"/><rect x="72" y="745" width="2" height="1" opacity="0.44"/><rect x="802" y="502" width="2" height="2" opacity="0.64"/><rect x="96" y="128" width="1" height="2" opacity="0.34"/><rect x="6" y="779" width="2" height="2" opacity="0.43"/><rect x="213" y="137" width="2" height="1" opacity="0.74"/><rect x="307" y="573" width="1" height="2" opacity="0.34"/><rect x="783" y="533" width="1" height="2" opacity="0.55"/><rect x="653" y="424" width="1" height="1" opacity="0.65"/><rect x="213" y="504" width="2" height="1" opacity="0.63"/><rect x="709" y="229" width="3" height="1" opacity="0.67"/><rect x="598" y="89" width="2" height="2" opacity="0.40"/><rect x="166" y="759" width="3" height="1" opacity="0.64"/><rect x="606" y="251" width="2" height="2" opacity="0.52"/><rect x="449" y="131" width="1" height="1" opacity="0.25"/><rect x="510" y="463" width="3" height="1" opacity="0.37"/><rect x="690" y="141" width="3" height="1" opacity="0.21"/><rect x="726" y="345" width="2" height="1" opacity="0.76"/><rect x="168" y="701" width="2" height="1" opacity="0.29"/><rect x="306" y="710" width="1" height="1" opacity="0.23"/><rect x="572" y="525" width="2" height="1" opacity="0.77"/><rect x="807" y="345" width="2" height="1" opacity="0.73"/><rect x="598" y="180" width="1" height="2" opacity="0.60"/><rect x="703" y="115" width="3" height="2" opacity="0.44"/><rect x="658" y="648" width="2" height="2" opacity="0.38"/><rect x="777" y="400" width="2" height="2" opacity="0.46"/><rect x="185" y="172" width="2" height="2" opacity="0.53"/><rect x="410" y="24" width="2" height="2" opacity="0.34"/><rect x="285" y="572" width="2" height="1" opacity="0.54"/><rect x="128" y="717" width="2" height="1" opacity="0.71"/><rect x="164" y="564" width="2" height="1" opacity="0.37"/><rect x="286" y="97" width="2" height="2" opacity="0.59"/><rect x="686" y="248" width="1" height="2" opacity="0.37"/><rect x="678" y="432" width="3" height="1" opacity="0.66"/><rect x="141" y="525" width="1" height="2" opacity="0.73"/><rect x="358" y="526" width="2" height="1" opacity="0.75"/><rect x="130" y="137" width="2" height="2" opacity="0.34"/><rect x="707" y="304" width="2" height="1" opacity="0.32"/><rect x="472" y="151" width="2" height="1" opacity="0.49"/><rect x="412" y="653" width="1" height="1" opacity="0.49"/><rect x="725" y="505" width="1" height="2" opacity="0.34"/><rect x="637" y="241" width="3" height="1" opacity="0.81"/><rect x="143" y="272" width="1" height="2" opacity="0.72"/><rect x="799" y="125" width="2" height="1" opacity="0.36"/><rect x="663" y="626" width="1" height="1" opacity="0.33"/><rect x="170" y="202" width="1" height="2" opacity="0.52"/><rect x="206" y="236" width="2" height="1" opacity="0.44"/><rect x="643" y="565" width="1" height="1" opacity="0.76"/><rect x="96" y="586" width="2" height="2" opacity="0.71"/><rect x="812" y="165" width="1" height="2" opacity="0.69"/><rect x="337" y="726" width="2" height="1" opacity="0.40"/><rect x="62" y="740" width="3" height="2" opacity="0.64"/><rect x="478" y="415" width="2" height="2" opacity="0.32"/><rect x="333" y="696" width="2" height="1" opacity="0.63"/><rect x="457" y="361" width="3" height="1" opacity="0.85"/><rect x="416" y="95" width="2" height="2" opacity="0.84"/><rect x="14" y="490" width="2" height="1" opacity="0.51"/><rect x="109" y="236" width="2" height="1" opacity="0.62"/><rect x="536" y="514" width="1" height="2" opacity="0.49"/><rect x="267" y="467" width="2" height="1" opacity="0.28"/><rect x="547" y="226" width="2" height="2" opacity="0.72"/><rect x="562" y="129" width="1" height="1" opacity="0.85"/><rect x="246" y="608" width="2" height="1" opacity="0.60"/><rect x="520" y="578" width="1" height="1" opacity="0.54"/><rect x="247" y="755" width="2" height="1" opacity="0.48"/><rect x="188" y="756" width="2" height="2" opacity="0.62"/><rect x="679" y="309" width="3" height="2" opacity="0.74"/><rect x="479" y="509" width="2" height="1" opacity="0.30"/><rect x="319" y="477" width="2" height="1" opacity="0.59"/><rect x="142" y="119" width="2" height="1" opacity="0.28"/><rect x="17" y="67" width="3" height="2" opacity="0.63"/><rect x="644" y="711" width="2" height="1" opacity="0.27"/><rect x="653" y="318" width="3" height="1" opacity="0.73"/><rect x="299" y="623" width="1" height="1" opacity="0.22"/><rect x="412" y="499" width="1" height="1" opacity="0.59"/><rect x="60" y="228" width="2" height="2" opacity="0.36"/><rect x="199" y="655" width="1" height="1" opacity="0.55"/><rect x="536" y="240" width="1" height="1" opacity="0.27"/><rect x="55" y="542" width="3" height="2" opacity="0.64"/><rect x="238" y="449" width="1" height="2" opacity="0.50"/><rect x="267" y="431" width="3" height="1" opacity="0.26"/><rect x="422" y="268" width="2" height="1" opacity="0.41"/><rect x="679" y="229" width="2" height="2" opacity="0.36"/><rect x="745" y="402" width="3" height="1" opacity="0.84"/><rect x="769" y="203" width="3" height="1" opacity="0.29"/><rect x="448" y="102" width="3" height="1" opacity="0.25"/><rect x="704" y="139" width="2" height="1" opacity="0.46"/><rect x="144" y="509" width="2" height="1" opacity="0.32"/><rect x="524" y="414" width="2" height="1" opacity="0.78"/><rect x="781" y="308" width="2" height="1" opacity="0.44"/><rect x="568" y="578" width="2" height="2" opacity="0.63"/><rect x="328" y="310" width="2" height="1" opacity="0.83"/><rect x="634" y="774" width="2" height="1" opacity="0.75"/><rect x="198" y="580" width="3" height="1" opacity="0.74"/><rect x="717" y="211" width="2" height="2" opacity="0.42"/><rect x="491" y="767" width="2" height="1" opacity="0.31"/><rect x="129" y="444" width="2" height="2" opacity="0.42"/><rect x="86" y="123" width="3" height="1" opacity="0.84"/><rect x="663" y="757" width="2" height="2" opacity="0.25"/><rect x="170" y="717" width="2" height="1" opacity="0.45"/><rect x="13" y="672" width="2" height="1" opacity="0.26"/><rect x="771" y="316" width="2" height="1" opacity="0.59"/><rect x="378" y="329" width="3" height="1" opacity="0.36"/><rect x="236" y="757" width="2" height="1" opacity="0.78"/><rect x="104" y="662" width="1" height="2" opacity="0.56"/><rect x="663" y="123" width="3" height="2" opacity="0.37"/><rect x="327" y="152" width="3" height="2" opacity="0.59"/><rect x="752" y="634" width="3" height="2" opacity="0.23"/><rect x="410" y="397" width="1" height="2" opacity="0.37"/><rect x="607" y="736" width="2" height="2" opacity="0.81"/><rect x="635" y="349" width="2" height="2" opacity="0.69"/><rect x="261" y="88" width="3" height="1" opacity="0.73"/><rect x="205" y="534" width="2" height="1" opacity="0.29"/><rect x="403" y="263" width="2" height="2" opacity="0.51"/><rect x="41" y="654" width="1" height="1" opacity="0.49"/><rect x="58" y="27" width="2" height="2" opacity="0.53"/><rect x="73" y="183" width="2" height="1" opacity="0.58"/><rect x="196" y="240" width="2" height="2" opacity="0.46"/><rect x="527" y="396" width="2" height="1" opacity="0.59"/><rect x="812" y="160" width="2" height="1" opacity="0.22"/><rect x="687" y="666" width="2" height="2" opacity="0.83"/><rect x="683" y="458" width="3" height="2" opacity="0.21"/><rect x="314" y="206" width="3" height="1" opacity="0.52"/><rect x="431" y="84" width="1" height="2" opacity="0.63"/><rect x="407" y="339" width="3" height="1" opacity="0.28"/><rect x="490" y="680" width="2" height="1" opacity="0.59"/><rect x="345" y="466" width="1" height="2" opacity="0.78"/><rect x="204" y="451" width="2" height="1" opacity="0.39"/><rect x="621" y="482" width="2" height="2" opacity="0.55"/><rect x="757" y="443" width="3" height="1" opacity="0.48"/><rect x="720" y="496" width="3" height="1" opacity="0.61"/><rect x="391" y="496" width="3" height="1" opacity="0.66"/><rect x="772" y="14" width="2" height="1" opacity="0.70"/><rect x="201" y="710" width="2" height="2" opacity="0.35"/><rect x="313" y="179" width="3" height="2" opacity="0.60"/><rect x="118" y="629" width="1" height="1" opacity="0.49"/><rect x="723" y="743" width="2" height="2" opacity="0.31"/><rect x="457" y="604" width="2" height="1" opacity="0.54"/><rect x="649" y="44" width="1" height="1" opacity="0.74"/><rect x="4" y="652" width="1" height="2" opacity="0.41"/><rect x="130" y="107" width="2" height="1" opacity="0.58"/><rect x="102" y="626" width="3" height="1" opacity="0.52"/><rect x="683" y="97" width="2" height="2" opacity="0.35"/><rect x="4" y="677" width="2" height="1" opacity="0.78"/><rect x="151" y="343" width="3" height="2" opacity="0.84"/><rect x="108" y="147" width="2" height="1" opacity="0.75"/><rect x="463" y="217" width="2" height="1" opacity="0.29"/><rect x="701" y="694" width="2" height="1" opacity="0.64"/><rect x="102" y="608" width="1" height="2" opacity="0.41"/><rect x="604" y="718" width="2" height="1" opacity="0.49"/><rect x="78" y="315" width="2" height="1" opacity="0.33"/><rect x="760" y="8" width="2" height="1" opacity="0.28"/><rect x="371" y="44" width="2" height="2" opacity="0.28"/><rect x="325" y="159" width="3" height="2" opacity="0.66"/><rect x="640" y="416" width="2" height="2" opacity="0.24"/><rect x="343" y="230" width="1" height="1" opacity="0.48"/><rect x="364" y="149" width="2" height="2" opacity="0.45"/><rect x="751" y="733" width="2" height="1" opacity="0.57"/><rect x="703" y="202" width="2" height="2" opacity="0.27"/><rect x="411" y="600" width="2" height="2" opacity="0.32"/><rect x="8" y="687" width="2" height="2" opacity="0.62"/><rect x="455" y="565" width="1" height="2" opacity="0.63"/><rect x="253" y="403" width="2" height="2" opacity="0.49"/><rect x="383" y="712" width="3" height="2" opacity="0.60"/><rect x="507" y="138" width="2" height="1" opacity="0.47"/><rect x="808" y="22" width="3" height="2" opacity="0.44"/><rect x="676" y="169" width="1" height="2" opacity="0.85"/><rect x="594" y="545" width="1" height="1" opacity="0.61"/><rect x="809" y="244" width="2" height="2" opacity="0.44"/><rect x="541" y="536" width="2" height="2" opacity="0.44"/><rect x="90" y="56" width="3" height="1" opacity="0.58"/><rect x="366" y="766" width="2" height="2" opacity="0.57"/><rect x="517" y="189" width="3" height="2" opacity="0.41"/><rect x="316" y="780" width="2" height="1" opacity="0.84"/><rect x="460" y="164" width="1" height="1" opacity="0.24"/><rect x="245" y="64" width="2" height="1" opacity="0.52"/><rect x="246" y="702" width="2" height="1" opacity="0.23"/><rect x="57" y="522" width="1" height="2" opacity="0.30"/><rect x="431" y="584" width="2" height="1" opacity="0.29"/><rect x="267" y="336" width="1" height="1" opacity="0.25"/><rect x="267" y="672" width="2" height="2" opacity="0.44"/><rect x="802" y="210" width="2" height="1" opacity="0.30"/><rect x="622" y="738" width="2" height="1" opacity="0.59"/><rect x="534" y="308" width="3" height="1" opacity="0.32"/><rect x="794" y="525" width="3" height="1" opacity="0.62"/><rect x="84" y="263" width="2" height="2" opacity="0.21"/><rect x="364" y="678" width="2" height="2" opacity="0.52"/><rect x="468" y="174" width="2" height="2" opacity="0.56"/><rect x="391" y="280" width="2" height="1" opacity="0.84"/><rect x="11" y="685" width="1" height="2" opacity="0.61"/><rect x="529" y="390" width="2" height="1" opacity="0.52"/><rect x="33" y="602" width="2" height="2" opacity="0.51"/><rect x="3" y="204" width="2" height="2" opacity="0.72"/><rect x="510" y="660" width="2" height="2" opacity="0.59"/><rect x="595" y="157" width="2" height="2" opacity="0.42"/><rect x="81" y="274" width="2" height="1" opacity="0.31"/><rect x="597" y="94" width="3" height="1" opacity="0.83"/><rect x="249" y="594" width="2" height="2" opacity="0.62"/><rect x="372" y="696" width="3" height="2" opacity="0.37"/><rect x="774" y="746" width="1" height="1" opacity="0.41"/><rect x="264" y="157" width="2" height="2" opacity="0.78"/><rect x="22" y="652" width="2" height="2" opacity="0.21"/><rect x="734" y="215" width="2" height="2" opacity="0.28"/><rect x="301" y="96" width="2" height="2" opacity="0.36"/><rect x="473" y="350" width="2" height="2" opacity="0.54"/><rect x="632" y="566" width="2" height="2" opacity="0.80"/><rect x="646" y="439" width="2" height="2" opacity="0.41"/><rect x="112" y="691" width="3" height="1" opacity="0.35"/><rect x="204" y="195" width="2" height="1" opacity="0.28"/><rect x="556" y="387" width="2" height="2" opacity="0.63"/><rect x="159" y="490" width="2" height="2" opacity="0.32"/><rect x="580" y="35" width="2" height="2" opacity="0.28"/><rect x="124" y="413" width="2" height="1" opacity="0.54"/><rect x="124" y="295" width="2" height="1" opacity="0.58"/><rect x="275" y="64" width="2" height="2" opacity="0.71"/><rect x="171" y="604" width="1" height="2" opacity="0.78"/><rect x="166" y="427" width="1" height="2" opacity="0.70"/><rect x="611" y="470" width="1" height="2" opacity="0.82"/><rect x="86" y="612" width="2" height="2" opacity="0.65"/><rect x="336" y="586" width="1" height="2" opacity="0.81"/><rect x="315" y="627" width="2" height="2" opacity="0.73"/><rect x="248" y="427" width="1" height="1" opacity="0.52"/><rect x="67" y="671" width="3" height="2" opacity="0.32"/><rect x="593" y="52" width="1" height="1" opacity="0.59"/><rect x="16" y="721" width="2" height="2" opacity="0.38"/><rect x="27" y="720" width="2" height="1" opacity="0.38"/><rect x="378" y="164" width="2" height="1" opacity="0.30"/><rect x="732" y="520" width="3" height="2" opacity="0.29"/><rect x="339" y="738" width="1" height="2" opacity="0.47"/><rect x="49" y="778" width="1" height="2" opacity="0.82"/><rect x="686" y="572" width="1" height="2" opacity="0.65"/><rect x="403" y="385" width="2" height="2" opacity="0.72"/><rect x="110" y="684" width="2" height="2" opacity="0.37"/><rect x="197" y="360" width="2" height="1" opacity="0.78"/><rect x="418" y="401" width="3" height="1" opacity="0.29"/><rect x="78" y="183" width="2" height="1" opacity="0.23"/><rect x="150" y="75" width="2" height="2" opacity="0.77"/><rect x="536" y="683" width="2" height="2" opacity="0.40"/><rect x="595" y="163" width="3" height="2" opacity="0.70"/><rect x="139" y="270" width="2" height="2" opacity="0.84"/><rect x="99" y="166" width="1" height="1" opacity="0.67"/><rect x="608" y="507" width="3" height="1" opacity="0.80"/><rect x="529" y="513" width="3" height="1" opacity="0.52"/><rect x="618" y="448" width="2" height="2" opacity="0.48"/><rect x="345" y="339" width="3" height="2" opacity="0.54"/><rect x="123" y="206" width="2" height="1" opacity="0.49"/><rect x="266" y="92" width="2" height="2" opacity="0.31"/><rect x="100" y="32" width="3" height="1" opacity="0.30"/><rect x="45" y="554" width="2" height="2" opacity="0.79"/><rect x="741" y="186" width="2" height="2" opacity="0.37"/><rect x="570" y="622" width="2" height="2" opacity="0.45"/><rect x="193" y="623" width="2" height="1" opacity="0.43"/><rect x="667" y="551" width="2" height="1" opacity="0.83"/><rect x="348" y="171" width="2" height="2" opacity="0.71"/><rect x="764" y="597" width="2" height="1" opacity="0.65"/><rect x="9" y="321" width="3" height="1" opacity="0.58"/><rect x="360" y="172" width="2" height="1" opacity="0.49"/><rect x="663" y="144" width="3" height="2" opacity="0.83"/><rect x="593" y="54" width="3" height="1" opacity="0.27"/><rect x="336" y="487" width="3" height="2" opacity="0.75"/><rect x="367" y="253" width="2" height="1" opacity="0.76"/><rect x="438" y="119" width="3" height="2" opacity="0.37"/><rect x="479" y="217" width="2" height="2" opacity="0.37"/><rect x="359" y="709" width="2" height="1" opacity="0.49"/><rect x="715" y="566" width="2" height="2" opacity="0.73"/><rect x="251" y="666" width="2" height="1" opacity="0.70"/><rect x="736" y="334" width="2" height="1" opacity="0.84"/><rect x="430" y="533" width="2" height="2" opacity="0.74"/><rect x="107" y="713" width="2" height="1" opacity="0.29"/><rect x="526" y="768" width="3" height="2" opacity="0.20"/><rect x="580" y="340" width="1" height="2" opacity="0.26"/><rect x="92" y="234" width="2" height="2" opacity="0.59"/><rect x="803" y="644" width="2" height="1" opacity="0.65"/><rect x="722" y="511" width="1" height="1" opacity="0.21"/><rect x="463" y="676" width="1" height="2" opacity="0.33"/><rect x="400" y="426" width="2" height="2" opacity="0.23"/><rect x="800" y="202" width="1" height="2" opacity="0.62"/><rect x="292" y="694" width="2" height="1" opacity="0.69"/><rect x="776" y="665" width="3" height="2" opacity="0.38"/><rect x="224" y="70" width="1" height="1" opacity="0.60"/><rect x="287" y="148" width="2" height="2" opacity="0.80"/><rect x="204" y="131" width="3" height="2" opacity="0.32"/><rect x="713" y="89" width="2" height="1" opacity="0.36"/><rect x="420" y="373" width="3" height="2" opacity="0.78"/><rect x="383" y="36" width="1" height="1" opacity="0.62"/><rect x="682" y="23" width="1" height="1" opacity="0.28"/><rect x="242" y="664" width="1" height="1" opacity="0.72"/><rect x="335" y="124" width="2" height="2" opacity="0.31"/><rect x="368" y="349" width="2" height="1" opacity="0.40"/><rect x="113" y="255" width="2" height="2" opacity="0.44"/><rect x="643" y="414" width="3" height="2" opacity="0.76"/><rect x="751" y="598" width="3" height="1" opacity="0.57"/><rect x="498" y="121" width="2" height="2" opacity="0.76"/><rect x="18" y="79" width="2" height="2" opacity="0.72"/><rect x="718" y="250" width="2" height="2" opacity="0.65"/><rect x="305" y="270" width="2" height="2" opacity="0.50"/><rect x="662" y="267" width="2" height="1" opacity="0.68"/><rect x="720" y="277" width="3" height="2" opacity="0.64"/><rect x="292" y="433" width="3" height="2" opacity="0.49"/><rect x="115" y="58" width="2" height="1" opacity="0.65"/><rect x="536" y="338" width="1" height="2" opacity="0.56"/><rect x="441" y="322" width="3" height="1" opacity="0.29"/><rect x="205" y="531" width="2" height="1" opacity="0.80"/><rect x="45" y="11" width="2" height="1" opacity="0.45"/><rect x="718" y="119" width="3" height="2" opacity="0.83"/><rect x="660" y="7" width="2" height="2" opacity="0.40"/><rect x="597" y="381" width="1" height="2" opacity="0.48"/><rect x="106" y="487" width="2" height="2" opacity="0.82"/><rect x="9" y="700" width="2" height="1" opacity="0.21"/><rect x="391" y="646" width="2" height="2" opacity="0.57"/><rect x="25" y="386" width="1" height="2" opacity="0.25"/><rect x="466" y="253" width="2" height="2" opacity="0.62"/><rect x="364" y="422" width="3" height="2" opacity="0.58"/><rect x="434" y="422" width="2" height="1" opacity="0.74"/><rect x="64" y="99" width="2" height="1" opacity="0.55"/><rect x="750" y="521" width="2" height="1" opacity="0.34"/><rect x="183" y="21" width="2" height="2" opacity="0.24"/><rect x="432" y="237" width="3" height="2" opacity="0.59"/><rect x="246" y="574" width="2" height="2" opacity="0.50"/><rect x="699" y="315" width="1" height="2" opacity="0.82"/><rect x="265" y="497" width="3" height="1" opacity="0.75"/><rect x="666" y="382" width="2" height="1" opacity="0.38"/><rect x="602" y="768" width="1" height="2" opacity="0.20"/><rect x="290" y="274" width="3" height="1" opacity="0.81"/><rect x="721" y="260" width="2" height="2" opacity="0.29"/><rect x="645" y="21" width="1" height="2" opacity="0.55"/><rect x="598" y="767" width="3" height="1" opacity="0.20"/><rect x="178" y="321" width="2" height="2" opacity="0.36"/><rect x="24" y="738" width="2" height="2" opacity="0.25"/><rect x="454" y="555" width="2" height="2" opacity="0.79"/><rect x="618" y="272" width="1" height="2" opacity="0.37"/><rect x="301" y="455" width="2" height="2" opacity="0.26"/><rect x="750" y="59" width="2" height="2" opacity="0.26"/><rect x="781" y="580" width="2" height="2" opacity="0.72"/><rect x="790" y="723" width="3" height="2" opacity="0.81"/><rect x="279" y="640" width="2" height="2" opacity="0.47"/><rect x="457" y="662" width="2" height="1" opacity="0.76"/><rect x="23" y="420" width="3" height="1" opacity="0.30"/><rect x="752" y="344" width="2" height="2" opacity="0.47"/><rect x="483" y="336" width="1" height="1" opacity="0.74"/><rect x="445" y="102" width="2" height="1" opacity="0.66"/><rect x="802" y="24" width="2" height="2" opacity="0.21"/><rect x="353" y="187" width="3" height="1" opacity="0.84"/><rect x="173" y="61" width="2" height="1" opacity="0.35"/><rect x="83" y="457" width="1" height="2" opacity="0.48"/><rect x="811" y="729" width="2" height="2" opacity="0.66"/><rect x="266" y="622" width="2" height="1" opacity="0.64"/><rect x="82" y="439" width="2" height="1" opacity="0.25"/><rect x="198" y="621" width="2" height="1" opacity="0.60"/><rect x="619" y="370" width="2" height="2" opacity="0.65"/><rect x="498" y="332" width="2" height="2" opacity="0.39"/><rect x="80" y="469" width="3" height="1" opacity="0.41"/><rect x="184" y="493" width="2" height="1" opacity="0.49"/><rect x="667" y="670" width="3" height="2" opacity="0.48"/><rect x="533" y="676" width="2" height="1" opacity="0.42"/><rect x="802" y="54" width="2" height="1" opacity="0.51"/><rect x="608" y="493" width="2" height="1" opacity="0.46"/><rect x="474" y="408" width="2" height="1" opacity="0.84"/><rect x="766" y="101" width="2" height="2" opacity="0.41"/><rect x="173" y="508" width="2" height="2" opacity="0.33"/><rect x="736" y="735" width="2" height="1" opacity="0.22"/><rect x="246" y="477" width="1" height="1" opacity="0.71"/><rect x="320" y="410" width="2" height="2" opacity="0.43"/><rect x="684" y="16" width="3" height="2" opacity="0.29"/><rect x="32" y="649" width="2" height="2" opacity="0.57"/><rect x="625" y="674" width="2" height="1" opacity="0.39"/><rect x="727" y="17" width="1" height="2" opacity="0.73"/><rect x="6" y="327" width="1" height="2" opacity="0.73"/><rect x="644" y="618" width="1" height="2" opacity="0.21"/><rect x="78" y="658" width="3" height="1" opacity="0.46"/><rect x="183" y="536" width="3" height="1" opacity="0.65"/><rect x="424" y="542" width="3" height="1" opacity="0.84"/><rect x="632" y="723" width="1" height="1" opacity="0.31"/><rect x="192" y="138" width="2" height="2" opacity="0.84"/><rect x="52" y="341" width="2" height="2" opacity="0.33"/><rect x="250" y="9" width="2" height="2" opacity="0.84"/><rect x="170" y="353" width="2" height="2" opacity="0.23"/><rect x="278" y="304" width="2" height="2" opacity="0.81"/><rect x="316" y="74" width="1" height="2" opacity="0.55"/><rect x="398" y="674" width="1" height="1" opacity="0.33"/><rect x="589" y="645" width="3" height="1" opacity="0.60"/><rect x="345" y="189" width="2" height="1" opacity="0.62"/><rect x="279" y="358" width="2" height="2" opacity="0.37"/><rect x="417" y="49" width="2" height="1" opacity="0.55"/><rect x="394" y="710" width="3" height="2" opacity="0.62"/><rect x="599" y="424" width="2" height="1" opacity="0.27"/><rect x="183" y="514" width="2" height="1" opacity="0.30"/><rect x="133" y="424" width="2" height="2" opacity="0.73"/><rect x="396" y="636" width="2" height="2" opacity="0.29"/><rect x="217" y="257" width="2" height="1" opacity="0.53"/><rect x="254" y="465" width="1" height="1" opacity="0.25"/><rect x="386" y="513" width="2" height="1" opacity="0.28"/><rect x="410" y="439" width="1" height="1" opacity="0.41"/><rect x="505" y="526" width="3" height="2" opacity="0.54"/><rect x="537" y="155" width="3" height="2" opacity="0.25"/><rect x="628" y="137" width="2" height="1" opacity="0.33"/><rect x="701" y="639" width="2" height="2" opacity="0.81"/><rect x="214" y="449" width="2" height="1" opacity="0.36"/><rect x="337" y="333" width="3" height="1" opacity="0.31"/><rect x="704" y="120" width="2" height="1" opacity="0.52"/><rect x="777" y="164" width="2" height="1" opacity="0.45"/><rect x="384" y="542" width="2" height="1" opacity="0.84"/><rect x="55" y="725" width="1" height="1" opacity="0.64"/><rect x="470" y="748" width="1" height="1" opacity="0.70"/><rect x="198" y="461" width="3" height="2" opacity="0.44"/><rect x="596" y="442" width="3" height="1" opacity="0.70"/><rect x="440" y="560" width="1" height="2" opacity="0.69"/><rect x="179" y="445" width="2" height="1" opacity="0.48"/><rect x="384" y="575" width="1" height="2" opacity="0.71"/><rect x="338" y="212" width="2" height="2" opacity="0.72"/><rect x="217" y="523" width="2" height="1" opacity="0.49"/><rect x="293" y="23" width="2" height="1" opacity="0.55"/><rect x="253" y="85" width="2" height="1" opacity="0.25"/><rect x="142" y="348" width="2" height="2" opacity="0.53"/><rect x="433" y="305" width="2" height="2" opacity="0.21"/><rect x="457" y="757" width="2" height="1" opacity="0.43"/><rect x="262" y="580" width="2" height="1" opacity="0.30"/><rect x="787" y="707" width="2" height="2" opacity="0.42"/><rect x="109" y="441" width="3" height="1" opacity="0.62"/><rect x="486" y="647" width="2" height="1" opacity="0.67"/><rect x="119" y="780" width="3" height="1" opacity="0.79"/><rect x="253" y="327" width="2" height="2" opacity="0.44"/><rect x="413" y="160" width="3" height="1" opacity="0.34"/><rect x="223" y="381" width="3" height="1" opacity="0.82"/><rect x="384" y="676" width="2" height="2" opacity="0.72"/><rect x="98" y="694" width="2" height="2" opacity="0.73"/><rect x="386" y="696" width="2" height="2" opacity="0.37"/><rect x="125" y="389" width="1" height="1" opacity="0.65"/><rect x="167" y="389" width="3" height="1" opacity="0.35"/><rect x="219" y="8" width="2" height="2" opacity="0.67"/><rect x="593" y="185" width="3" height="2" opacity="0.76"/><rect x="777" y="465" width="1" height="2" opacity="0.77"/><rect x="137" y="190" width="2" height="2" opacity="0.29"/><rect x="11" y="166" width="3" height="2" opacity="0.40"/><rect x="680" y="733" width="2" height="2" opacity="0.24"/><rect x="319" y="353" width="2" height="1" opacity="0.29"/><rect x="414" y="755" width="2" height="1" opacity="0.27"/><rect x="374" y="405" width="2" height="1" opacity="0.30"/><rect x="778" y="316" width="3" height="2" opacity="0.26"/><rect x="612" y="332" width="2" height="1" opacity="0.68"/><rect x="88" y="186" width="2" height="1" opacity="0.62"/><rect x="630" y="753" width="3" height="2" opacity="0.26"/><rect x="569" y="640" width="2" height="1" opacity="0.51"/><rect x="609" y="653" width="1" height="2" opacity="0.65"/><rect x="101" y="85" width="1" height="1" opacity="0.37"/><rect x="520" y="755" width="2" height="2" opacity="0.28"/><rect x="646" y="595" width="2" height="1" opacity="0.59"/><rect x="99" y="171" width="2" height="1" opacity="0.60"/><rect x="510" y="669" width="1" height="1" opacity="0.25"/><rect x="146" y="449" width="2" height="1" opacity="0.26"/><rect x="276" y="189" width="3" height="1" opacity="0.32"/><rect x="162" y="330" width="3" height="1" opacity="0.27"/><rect x="184" y="510" width="1" height="1" opacity="0.39"/><rect x="598" y="297" width="2" height="2" opacity="0.51"/><rect x="29" y="710" width="1" height="2" opacity="0.76"/><rect x="302" y="341" width="3" height="2" opacity="0.84"/><rect x="522" y="144" width="3" height="2" opacity="0.58"/><rect x="13" y="120" width="3" height="2" opacity="0.40"/><rect x="489" y="641" width="2" height="1" opacity="0.39"/><rect x="211" y="399" width="3" height="1" opacity="0.45"/><rect x="663" y="189" width="2" height="2" opacity="0.29"/><rect x="247" y="531" width="2" height="1" opacity="0.40"/><rect x="479" y="487" width="1" height="2" opacity="0.42"/><rect x="361" y="534" width="2" height="2" opacity="0.44"/><rect x="642" y="532" width="3" height="1" opacity="0.28"/><rect x="422" y="670" width="2" height="2" opacity="0.80"/><rect x="453" y="717" width="2" height="1" opacity="0.54"/><rect x="231" y="364" width="2" height="2" opacity="0.20"/><rect x="290" y="157" width="3" height="1" opacity="0.53"/><rect x="389" y="723" width="2" height="1" opacity="0.45"/><rect x="306" y="299" width="1" height="1" opacity="0.22"/><rect x="370" y="652" width="3" height="1" opacity="0.23"/><rect x="104" y="706" width="3" height="1" opacity="0.33"/><rect x="685" y="779" width="1" height="2" opacity="0.50"/><rect x="661" y="268" width="2" height="1" opacity="0.76"/><rect x="575" y="9" width="1" height="2" opacity="0.77"/><rect x="88" y="451" width="2" height="2" opacity="0.79"/><rect x="733" y="555" width="2" height="1" opacity="0.70"/><rect x="64" y="678" width="3" height="2" opacity="0.81"/><rect x="403" y="66" width="2" height="1" opacity="0.52"/><rect x="268" y="518" width="2" height="2" opacity="0.57"/><rect x="749" y="242" width="3" height="1" opacity="0.30"/><rect x="244" y="285" width="2" height="1" opacity="0.70"/><rect x="392" y="49" width="2" height="1" opacity="0.26"/><rect x="398" y="679" width="2" height="1" opacity="0.85"/><rect x="775" y="336" width="2" height="1" opacity="0.25"/><rect x="385" y="518" width="2" height="1" opacity="0.57"/><rect x="418" y="555" width="2" height="1" opacity="0.45"/><rect x="451" y="20" width="2" height="2" opacity="0.23"/><rect x="812" y="708" width="2" height="1" opacity="0.52"/><rect x="200" y="344" width="1" height="1" opacity="0.59"/><rect x="605" y="211" width="3" height="1" opacity="0.37"/><rect x="336" y="284" width="1" height="2" opacity="0.52"/><rect x="446" y="687" width="1" height="1" opacity="0.43"/><rect x="560" y="418" width="2" height="2" opacity="0.75"/><rect x="655" y="50" width="1" height="2" opacity="0.38"/><rect x="421" y="84" width="2" height="2" opacity="0.25"/><rect x="410" y="747" width="2" height="2" opacity="0.82"/><rect x="697" y="676" width="3" height="1" opacity="0.24"/><rect x="775" y="505" width="2" height="2" opacity="0.40"/><rect x="303" y="615" width="2" height="2" opacity="0.34"/><rect x="642" y="436" width="3" height="1" opacity="0.52"/><rect x="156" y="563" width="3" height="2" opacity="0.85"/><rect x="14" y="451" width="2" height="1" opacity="0.41"/><rect x="420" y="406" width="2" height="2" opacity="0.74"/><rect x="645" y="739" width="2" height="2" opacity="0.74"/><rect x="658" y="492" width="3" height="1" opacity="0.76"/><rect x="59" y="377" width="2" height="2" opacity="0.51"/><rect x="440" y="44" width="2" height="2" opacity="0.67"/><rect x="473" y="139" width="2" height="2" opacity="0.76"/><rect x="436" y="493" width="2" height="2" opacity="0.73"/><rect x="452" y="511" width="2" height="1" opacity="0.33"/><rect x="433" y="69" width="2" height="2" opacity="0.23"/><rect x="334" y="707" width="1" height="1" opacity="0.76"/><rect x="411" y="87" width="2" height="2" opacity="0.66"/><rect x="268" y="626" width="2" height="1" opacity="0.82"/><rect x="158" y="106" width="3" height="2" opacity="0.33"/><rect x="285" y="273" width="2" height="1" opacity="0.80"/><rect x="247" y="339" width="2" height="1" opacity="0.38"/><rect x="547" y="323" width="2" height="2" opacity="0.35"/><rect x="477" y="278" width="3" height="2" opacity="0.47"/><rect x="243" y="377" width="2" height="1" opacity="0.60"/><rect x="723" y="589" width="2" height="1" opacity="0.72"/><rect x="681" y="363" width="3" height="2" opacity="0.25"/><rect x="62" y="386" width="3" height="2" opacity="0.68"/><rect x="692" y="373" width="2" height="1" opacity="0.62"/><rect x="75" y="604" width="2" height="2" opacity="0.44"/><rect x="419" y="199" width="2" height="1" opacity="0.24"/><rect x="721" y="188" width="2" height="2" opacity="0.81"/><rect x="684" y="22" width="2" height="1" opacity="0.83"/><rect x="713" y="481" width="3" height="2" opacity="0.48"/><rect x="348" y="116" width="3" height="2" opacity="0.38"/><rect x="102" y="679" width="3" height="2" opacity="0.74"/><rect x="532" y="35" width="1" height="1" opacity="0.74"/><rect x="130" y="601" width="1" height="1" opacity="0.30"/><rect x="761" y="592" width="2" height="2" opacity="0.32"/><rect x="251" y="627" width="2" height="1" opacity="0.61"/><rect x="29" y="67" width="3" height="2" opacity="0.43"/><rect x="421" y="252" width="2" height="1" opacity="0.47"/><rect x="413" y="37" width="3" height="2" opacity="0.23"/><rect x="766" y="603" width="2" height="1" opacity="0.56"/><rect x="166" y="29" width="2" height="1" opacity="0.45"/><rect x="680" y="176" width="3" height="1" opacity="0.84"/><rect x="539" y="409" width="1" height="2" opacity="0.82"/><rect x="400" y="670" width="1" height="1" opacity="0.74"/><rect x="389" y="171" width="2" height="1" opacity="0.58"/><rect x="380" y="36" width="2" height="1" opacity="0.45"/><rect x="394" y="67" width="2" height="2" opacity="0.50"/><rect x="39" y="290" width="3" height="1" opacity="0.37"/><rect x="740" y="756" width="2" height="2" opacity="0.55"/><rect x="16" y="380" width="3" height="2" opacity="0.81"/><rect x="240" y="339" width="3" height="1" opacity="0.22"/><rect x="14" y="364" width="1" height="1" opacity="0.26"/><rect x="719" y="178" width="2" height="2" opacity="0.69"/><rect x="553" y="322" width="3" height="1" opacity="0.56"/><rect x="773" y="397" width="3" height="2" opacity="0.50"/><rect x="337" y="539" width="1" height="2" opacity="0.80"/><rect x="621" y="425" width="2" height="2" opacity="0.26"/><rect x="78" y="422" width="3" height="1" opacity="0.44"/><rect x="382" y="160" width="2" height="2" opacity="0.32"/><rect x="275" y="403" width="2" height="2" opacity="0.47"/><rect x="676" y="390" width="1" height="2" opacity="0.46"/><rect x="715" y="341" width="2" height="2" opacity="0.76"/><rect x="611" y="602" width="2" height="2" opacity="0.39"/><rect x="446" y="748" width="2" height="1" opacity="0.26"/><rect x="292" y="722" width="1" height="1" opacity="0.23"/><rect x="224" y="400" width="2" height="2" opacity="0.32"/><rect x="814" y="437" width="3" height="1" opacity="0.27"/><rect x="425" y="506" width="1" height="2" opacity="0.40"/><rect x="608" y="482" width="3" height="1" opacity="0.47"/><rect x="72" y="581" width="2" height="1" opacity="0.54"/><rect x="34" y="764" width="3" height="1" opacity="0.70"/><rect x="228" y="484" width="2" height="2" opacity="0.51"/><rect x="434" y="521" width="2" height="2" opacity="0.74"/><rect x="134" y="246" width="2" height="1" opacity="0.72"/><rect x="108" y="60" width="1" height="1" opacity="0.33"/><rect x="217" y="544" width="2" height="2" opacity="0.40"/><rect x="413" y="104" width="2" height="1" opacity="0.52"/><rect x="787" y="658" width="2" height="2" opacity="0.80"/><rect x="730" y="442" width="3" height="1" opacity="0.31"/><rect x="264" y="174" width="2" height="2" opacity="0.60"/><rect x="266" y="599" width="3" height="2" opacity="0.26"/><rect x="691" y="397" width="2" height="2" opacity="0.59"/><rect x="779" y="207" width="2" height="2" opacity="0.73"/><rect x="677" y="119" width="3" height="2" opacity="0.66"/><rect x="270" y="374" width="2" height="1" opacity="0.85"/><rect x="129" y="710" width="2" height="2" opacity="0.33"/><rect x="191" y="698" width="2" height="1" opacity="0.68"/><rect x="221" y="433" width="1" height="1" opacity="0.66"/><rect x="783" y="368" width="2" height="2" opacity="0.25"/><rect x="668" y="690" width="2" height="2" opacity="0.66"/><rect x="701" y="688" width="1" height="2" opacity="0.36"/><rect x="654" y="536" width="2" height="2" opacity="0.79"/><rect x="655" y="776" width="2" height="1" opacity="0.68"/><rect x="547" y="314" width="2" height="1" opacity="0.82"/><rect x="405" y="126" width="2" height="2" opacity="0.65"/><rect x="417" y="448" width="3" height="1" opacity="0.80"/><rect x="243" y="342" width="2" height="2" opacity="0.24"/><rect x="235" y="356" width="2" height="1" opacity="0.39"/><rect x="487" y="323" width="2" height="2" opacity="0.53"/><rect x="356" y="415" width="3" height="2" opacity="0.64"/><rect x="93" y="7" width="2" height="2" opacity="0.27"/><rect x="672" y="197" width="2" height="2" opacity="0.74"/><rect x="736" y="567" width="1" height="1" opacity="0.58"/><rect x="564" y="267" width="2" height="2" opacity="0.72"/><rect x="359" y="141" width="1" height="1" opacity="0.80"/><rect x="68" y="436" width="1" height="2" opacity="0.63"/><rect x="219" y="586" width="2" height="2" opacity="0.69"/><rect x="470" y="44" width="3" height="2" opacity="0.53"/><rect x="492" y="230" width="2" height="2" opacity="0.75"/><rect x="792" y="695" width="1" height="1" opacity="0.65"/><rect x="755" y="461" width="1" height="2" opacity="0.59"/><rect x="641" y="606" width="1" height="1" opacity="0.51"/><rect x="221" y="475" width="2" height="2" opacity="0.50"/><rect x="440" y="460" width="2" height="2" opacity="0.38"/><rect x="733" y="498" width="3" height="1" opacity="0.80"/><rect x="105" y="283" width="3" height="2" opacity="0.85"/><rect x="250" y="55" width="2" height="1" opacity="0.53"/><rect x="15" y="200" width="2" height="1" opacity="0.73"/><rect x="416" y="720" width="2" height="1" opacity="0.65"/><rect x="711" y="694" width="3" height="1" opacity="0.59"/><rect x="403" y="187" width="3" height="2" opacity="0.27"/><rect x="329" y="370" width="1" height="2" opacity="0.34"/><rect x="746" y="589" width="1" height="1" opacity="0.48"/><rect x="648" y="586" width="2" height="2" opacity="0.35"/><rect x="390" y="168" width="3" height="1" opacity="0.24"/><rect x="723" y="609" width="3" height="1" opacity="0.58"/><rect x="403" y="590" width="3" height="2" opacity="0.38"/><rect x="422" y="169" width="1" height="2" opacity="0.54"/><rect x="710" y="562" width="2" height="1" opacity="0.50"/><rect x="417" y="538" width="1" height="1" opacity="0.71"/><rect x="555" y="96" width="2" height="2" opacity="0.40"/><rect x="291" y="385" width="2" height="2" opacity="0.85"/><rect x="599" y="291" width="3" height="2" opacity="0.30"/><rect x="514" y="748" width="2" height="1" opacity="0.72"/><rect x="263" y="115" width="3" height="2" opacity="0.49"/><rect x="297" y="594" width="2" height="2" opacity="0.80"/><rect x="625" y="140" width="2" height="1" opacity="0.20"/><rect x="166" y="267" width="2" height="2" opacity="0.52"/><rect x="582" y="514" width="2" height="1" opacity="0.41"/><rect x="9" y="218" width="2" height="2" opacity="0.78"/><rect x="206" y="318" width="1" height="1" opacity="0.56"/><rect x="45" y="223" width="2" height="1" opacity="0.60"/><rect x="526" y="602" width="2" height="1" opacity="0.32"/><rect x="199" y="34" width="3" height="1" opacity="0.34"/><rect x="695" y="33" width="1" height="2" opacity="0.30"/><rect x="57" y="520" width="1" height="2" opacity="0.60"/><rect x="248" y="660" width="1" height="2" opacity="0.72"/><rect x="276" y="36" width="1" height="1" opacity="0.53"/><rect x="623" y="157" width="2" height="1" opacity="0.72"/><rect x="574" y="92" width="2" height="1" opacity="0.58"/><rect x="596" y="126" width="3" height="1" opacity="0.33"/><rect x="38" y="500" width="2" height="1" opacity="0.31"/><rect x="651" y="442" width="3" height="1" opacity="0.62"/><rect x="755" y="508" width="3" height="2" opacity="0.70"/><rect x="401" y="29" width="3" height="2" opacity="0.47"/><rect x="275" y="309" width="2" height="2" opacity="0.72"/><rect x="178" y="530" width="2" height="1" opacity="0.26"/><rect x="179" y="80" width="2" height="2" opacity="0.31"/><rect x="783" y="476" width="1" height="2" opacity="0.75"/><rect x="28" y="145" width="2" height="1" opacity="0.69"/><rect x="466" y="588" width="2" height="1" opacity="0.58"/><rect x="488" y="150" width="1" height="2" opacity="0.66"/><rect x="593" y="521" width="2" height="2" opacity="0.85"/><rect x="250" y="314" width="1" height="2" opacity="0.70"/><rect x="14" y="489" width="3" height="1" opacity="0.38"/><rect x="590" y="67" width="1" height="1" opacity="0.61"/><rect x="616" y="426" width="3" height="1" opacity="0.72"/><rect x="147" y="682" width="2" height="2" opacity="0.81"/><rect x="457" y="744" width="2" height="1" opacity="0.25"/><rect x="52" y="93" width="2" height="1" opacity="0.84"/><rect x="469" y="255" width="2" height="1" opacity="0.54"/><rect x="159" y="153" width="1" height="1" opacity="0.58"/><rect x="583" y="622" width="1" height="1" opacity="0.25"/><rect x="482" y="432" width="1" height="2" opacity="0.27"/><rect x="441" y="281" width="2" height="1" opacity="0.59"/><rect x="211" y="342" width="3" height="2" opacity="0.24"/><rect x="323" y="645" width="2" height="1" opacity="0.46"/><rect x="414" y="589" width="2" height="1" opacity="0.45"/><rect x="581" y="158" width="3" height="1" opacity="0.21"/><rect x="159" y="139" width="2" height="1" opacity="0.21"/><rect x="715" y="74" width="2" height="1" opacity="0.81"/><rect x="367" y="668" width="1" height="1" opacity="0.71"/><rect x="529" y="606" width="2" height="1" opacity="0.25"/><rect x="428" y="474" width="2" height="1" opacity="0.84"/><rect x="286" y="171" width="2" height="2" opacity="0.82"/><rect x="549" y="345" width="2" height="2" opacity="0.61"/><rect x="193" y="446" width="2" height="2" opacity="0.44"/><rect x="714" y="441" width="2" height="2" opacity="0.36"/><rect x="461" y="245" width="1" height="2" opacity="0.61"/><rect x="278" y="329" width="3" height="1" opacity="0.84"/><rect x="810" y="281" width="3" height="1" opacity="0.54"/><rect x="461" y="156" width="2" height="2" opacity="0.70"/><rect x="752" y="487" width="1" height="1" opacity="0.29"/><rect x="376" y="52" width="2" height="2" opacity="0.66"/><rect x="696" y="284" width="3" height="2" opacity="0.35"/><rect x="180" y="498" width="1" height="1" opacity="0.52"/><rect x="345" y="12" width="2" height="2" opacity="0.54"/><rect x="275" y="775" width="2" height="1" opacity="0.73"/><rect x="648" y="385" width="2" height="1" opacity="0.47"/><rect x="670" y="531" width="1" height="2" opacity="0.61"/><rect x="489" y="585" width="3" height="2" opacity="0.25"/><rect x="569" y="280" width="3" height="1" opacity="0.60"/><rect x="762" y="342" width="2" height="2" opacity="0.44"/><rect x="146" y="618" width="2" height="2" opacity="0.59"/><rect x="270" y="768" width="1" height="2" opacity="0.64"/><rect x="268" y="155" width="3" height="1" opacity="0.72"/><rect x="44" y="378" width="2" height="1" opacity="0.28"/><rect x="200" y="574" width="3" height="1" opacity="0.26"/><rect x="112" y="564" width="2" height="1" opacity="0.82"/><rect x="797" y="164" width="2" height="1" opacity="0.40"/><rect x="382" y="738" width="2" height="1" opacity="0.40"/><rect x="546" y="740" width="1" height="2" opacity="0.27"/><rect x="505" y="141" width="1" height="1" opacity="0.64"/><rect x="782" y="453" width="3" height="2" opacity="0.83"/><rect x="655" y="266" width="1" height="2" opacity="0.80"/><rect x="55" y="720" width="1" height="1" opacity="0.68"/><rect x="487" y="176" width="1" height="2" opacity="0.49"/><rect x="104" y="437" width="2" height="2" opacity="0.37"/><rect x="714" y="483" width="3" height="2" opacity="0.37"/><rect x="580" y="182" width="2" height="1" opacity="0.77"/><rect x="245" y="556" width="2" height="1" opacity="0.21"/><rect x="559" y="606" width="2" height="2" opacity="0.85"/><rect x="587" y="252" width="2" height="2" opacity="0.79"/><rect x="356" y="216" width="2" height="1" opacity="0.54"/><rect x="242" y="50" width="3" height="1" opacity="0.46"/><rect x="699" y="16" width="2" height="1" opacity="0.36"/><rect x="223" y="135" width="3" height="2" opacity="0.20"/><rect x="32" y="751" width="1" height="2" opacity="0.63"/><rect x="416" y="421" width="2" height="2" opacity="0.28"/><rect x="671" y="251" width="2" height="2" opacity="0.24"/><rect x="183" y="495" width="2" height="1" opacity="0.67"/><rect x="281" y="474" width="2" height="2" opacity="0.40"/><rect x="562" y="15" width="2" height="2" opacity="0.45"/><rect x="629" y="587" width="2" height="2" opacity="0.60"/><rect x="386" y="270" width="2" height="1" opacity="0.67"/><rect x="338" y="24" width="2" height="1" opacity="0.39"/><rect x="170" y="686" width="2" height="1" opacity="0.24"/><rect x="562" y="735" width="2" height="1" opacity="0.35"/><rect x="114" y="717" width="2" height="2" opacity="0.54"/><rect x="612" y="487" width="1" height="2" opacity="0.63"/><rect x="396" y="593" width="2" height="2" opacity="0.62"/><rect x="20" y="385" width="3" height="1" opacity="0.52"/><rect x="137" y="460" width="2" height="2" opacity="0.27"/><rect x="379" y="169" width="2" height="1" opacity="0.39"/><rect x="320" y="485" width="2" height="2" opacity="0.25"/><rect x="40" y="461" width="2" height="2" opacity="0.28"/><rect x="186" y="136" width="2" height="2" opacity="0.58"/><rect x="432" y="776" width="1" height="1" opacity="0.27"/><rect x="255" y="107" width="2" height="1" opacity="0.44"/><rect x="594" y="754" width="1" height="2" opacity="0.65"/><rect x="763" y="370" width="2" height="1" opacity="0.78"/><rect x="117" y="132" width="1" height="1" opacity="0.68"/><rect x="243" y="87" width="2" height="2" opacity="0.41"/><rect x="240" y="76" width="3" height="2" opacity="0.44"/><rect x="270" y="634" width="2" height="2" opacity="0.71"/><rect x="165" y="559" width="3" height="2" opacity="0.51"/><rect x="658" y="120" width="2" height="1" opacity="0.76"/><rect x="328" y="331" width="2" height="2" opacity="0.66"/><rect x="675" y="717" width="3" height="2" opacity="0.32"/><rect x="281" y="244" width="1" height="1" opacity="0.85"/><rect x="253" y="727" width="1" height="2" opacity="0.71"/><rect x="10" y="620" width="2" height="2" opacity="0.72"/><rect x="129" y="444" width="2" height="1" opacity="0.72"/><rect x="404" y="373" width="2" height="2" opacity="0.42"/><rect x="633" y="295" width="2" height="1" opacity="0.78"/><rect x="766" y="607" width="2" height="2" opacity="0.76"/><rect x="728" y="446" width="3" height="2" opacity="0.80"/><rect x="55" y="696" width="3" height="1" opacity="0.85"/><rect x="590" y="562" width="2" height="2" opacity="0.60"/><rect x="161" y="426" width="2" height="1" opacity="0.59"/><rect x="378" y="760" width="2" height="2" opacity="0.48"/><rect x="398" y="188" width="2" height="1" opacity="0.70"/><rect x="312" y="467" width="3" height="2" opacity="0.40"/><rect x="553" y="290" width="2" height="1" opacity="0.38"/><rect x="7" y="699" width="3" height="1" opacity="0.62"/><rect x="677" y="695" width="2" height="2" opacity="0.84"/><rect x="320" y="568" width="2" height="2" opacity="0.72"/><rect x="237" y="719" width="2" height="2" opacity="0.33"/><rect x="544" y="145" width="1" height="2" opacity="0.81"/><rect x="113" y="632" width="2" height="1" opacity="0.70"/><rect x="104" y="415" width="3" height="2" opacity="0.68"/><rect x="536" y="763" width="2" height="2" opacity="0.32"/><rect x="443" y="256" width="2" height="2" opacity="0.81"/><rect x="157" y="503" width="2" height="1" opacity="0.58"/><rect x="65" y="545" width="2" height="2" opacity="0.21"/><rect x="789" y="482" width="2" height="2" opacity="0.79"/><rect x="730" y="466" width="1" height="1" opacity="0.47"/><rect x="469" y="648" width="2" height="2" opacity="0.75"/><rect x="255" y="198" width="1" height="1" opacity="0.40"/><rect x="260" y="676" width="2" height="2" opacity="0.39"/><rect x="306" y="500" width="2" height="1" opacity="0.39"/><rect x="348" y="390" width="1" height="1" opacity="0.75"/><rect x="263" y="264" width="2" height="1" opacity="0.65"/><rect x="133" y="321" width="1" height="1" opacity="0.77"/><rect x="716" y="30" width="2" height="2" opacity="0.53"/><rect x="536" y="389" width="2" height="2" opacity="0.78"/><rect x="460" y="419" width="2" height="2" opacity="0.42"/><rect x="709" y="703" width="1" height="2" opacity="0.80"/><rect x="592" y="507" width="2" height="2" opacity="0.27"/><rect x="487" y="192" width="3" height="2" opacity="0.62"/><rect x="197" y="496" width="2" height="2" opacity="0.35"/><rect x="249" y="258" width="2" height="2" opacity="0.81"/><rect x="589" y="569" width="2" height="1" opacity="0.71"/><rect x="432" y="597" width="2" height="2" opacity="0.58"/><rect x="156" y="496" width="2" height="2" opacity="0.68"/><rect x="216" y="198" width="3" height="1" opacity="0.83"/><rect x="775" y="197" width="2" height="1" opacity="0.82"/><rect x="716" y="60" width="3" height="1" opacity="0.83"/><rect x="779" y="587" width="2" height="2" opacity="0.84"/><rect x="86" y="477" width="2" height="1" opacity="0.49"/><rect x="667" y="551" width="2" height="2" opacity="0.53"/><rect x="444" y="456" width="1" height="1" opacity="0.73"/><rect x="367" y="127" width="1" height="1" opacity="0.68"/><rect x="509" y="713" width="1" height="1" opacity="0.42"/><rect x="136" y="497" width="2" height="1" opacity="0.27"/><rect x="698" y="762" width="2" height="2" opacity="0.42"/><rect x="414" y="671" width="2" height="2" opacity="0.26"/><rect x="49" y="120" width="2" height="1" opacity="0.85"/><rect x="658" y="93" width="3" height="2" opacity="0.60"/><rect x="754" y="744" width="2" height="2" opacity="0.82"/><rect x="801" y="469" width="3" height="1" opacity="0.78"/><rect x="692" y="342" width="3" height="2" opacity="0.75"/><rect x="311" y="201" width="1" height="2" opacity="0.33"/><rect x="117" y="725" width="2" height="1" opacity="0.43"/><rect x="794" y="540" width="2" height="1" opacity="0.68"/><rect x="233" y="592" width="2" height="2" opacity="0.80"/><rect x="412" y="466" width="2" height="1" opacity="0.65"/><rect x="111" y="45" width="2" height="2" opacity="0.28"/><rect x="264" y="222" width="1" height="2" opacity="0.56"/><rect x="98" y="351" width="1" height="2" opacity="0.70"/><rect x="160" y="77" width="1" height="2" opacity="0.55"/><rect x="89" y="662" width="2" height="1" opacity="0.85"/><rect x="599" y="336" width="2" height="2" opacity="0.80"/><rect x="455" y="272" width="3" height="2" opacity="0.23"/><rect x="791" y="236" width="1" height="1" opacity="0.61"/><rect x="670" y="100" width="1" height="2" opacity="0.31"/><rect x="524" y="241" width="3" height="2" opacity="0.47"/><rect x="486" y="357" width="1" height="2" opacity="0.72"/><rect x="705" y="374" width="2" height="1" opacity="0.69"/><rect x="446" y="37" width="2" height="1" opacity="0.62"/><rect x="98" y="503" width="2" height="1" opacity="0.45"/><rect x="671" y="656" width="1" height="2" opacity="0.53"/><rect x="97" y="534" width="3" height="1" opacity="0.57"/><rect x="621" y="574" width="2" height="1" opacity="0.69"/><rect x="374" y="90" width="2" height="2" opacity="0.51"/><rect x="672" y="732" width="1" height="2" opacity="0.47"/><rect x="108" y="63" width="2" height="1" opacity="0.56"/><rect x="445" y="262" width="1" height="1" opacity="0.48"/><rect x="595" y="118" width="3" height="1" opacity="0.33"/><rect x="512" y="430" width="3" height="1" opacity="0.60"/><rect x="325" y="678" width="2" height="2" opacity="0.45"/><rect x="702" y="461" width="3" height="2" opacity="0.84"/><rect x="758" y="484" width="2" height="2" opacity="0.46"/><rect x="403" y="332" width="2" height="2" opacity="0.33"/><rect x="485.3" y="288" width="2" height="2" opacity="0.34"/><rect x="485.6" y="296" width="2" height="2" opacity="0.68"/><rect x="486.2" y="305" width="2" height="2" opacity="0.80"/><rect x="484.9" y="316" width="2" height="2" opacity="0.37"/><rect x="485.0" y="327" width="2" height="2" opacity="0.75"/><rect x="484.9" y="332" width="2" height="2" opacity="0.80"/><rect x="485.7" y="341" width="2" height="2" opacity="0.60"/><rect x="485.3" y="347" width="2" height="2" opacity="0.48"/><rect x="486.1" y="358" width="2" height="2" opacity="0.65"/><rect x="485.5" y="365" width="2" height="2" opacity="0.76"/><rect x="485.4" y="372" width="2" height="2" opacity="0.61"/><rect x="484.8" y="386" width="2" height="2" opacity="0.65"/><rect x="485.6" y="395" width="2" height="2" opacity="0.72"/><rect x="485.8" y="401" width="2" height="2" opacity="0.46"/><rect x="485.9" y="412" width="2" height="2" opacity="0.51"/><rect x="486.0" y="419" width="2" height="2" opacity="0.65"/><rect x="486.0" y="429" width="2" height="2" opacity="0.77"/><rect x="485.9" y="436" width="2" height="2" opacity="0.70"/><rect x="486.2" y="443" width="2" height="2" opacity="0.46"/><rect x="485.7" y="457" width="2" height="2" opacity="0.79"/><rect x="486.1" y="470" width="2" height="2" opacity="0.49"/><rect x="485.7" y="479" width="2" height="2" opacity="0.70"/><rect x="486.2" y="488" width="2" height="2" opacity="0.41"/><rect x="485.0" y="498" width="2" height="2" opacity="0.39"/><rect x="484.9" y="505" width="2" height="2" opacity="0.58"/><rect x="485.4" y="516" width="2" height="2" opacity="0.70"/><rect x="471.4" y="252" width="2" height="2" opacity="0.44"/><rect x="470.6" y="261" width="2" height="2" opacity="0.48"/><rect x="470.8" y="276" width="2" height="2" opacity="0.70"/><rect x="471.4" y="286" width="2" height="2" opacity="0.84"/><rect x="471.8" y="300" width="2" height="2" opacity="0.88"/><rect x="471.8" y="310" width="2" height="2" opacity="0.78"/><rect x="471.0" y="319" width="2" height="2" opacity="0.66"/><rect x="470.7" y="333" width="2" height="2" opacity="0.85"/></g>
<g id="sig">
<rect x="469.2" y="112" width="6" height="100" rx="3" fill="#5a1a98" filter="url(#b3)" opacity="0.7"/>
<rect x="484" y="140" width="5.2" height="72" rx="2.6" fill="#4a1490" filter="url(#b3)" opacity="0.6"/>
<rect x="470.2" y="26" width="4" height="224" fill="url(#l1)" filter="url(#b3)" opacity="0.55"/>
<rect x="470.5" y="26" width="3.4" height="224" fill="url(#l1)" filter="url(#b4)"/>
<rect x="484.8" y="60" width="3.6" height="226" fill="url(#l2)" filter="url(#b3)" opacity="0.5"/>
<rect x="485.3" y="60" width="2.6" height="226" fill="url(#l2)" filter="url(#b4)"/>
<g fill="#040405" filter="url(#b1)"><rect x="469.2" y="70.7" width="6" height="1.9" opacity="0.67"/><rect x="469.2" y="57.2" width="6" height="2.5" opacity="0.70"/><rect x="469.2" y="79.4" width="6" height="2.8" opacity="0.54"/><rect x="469.2" y="29.4" width="6" height="2.9" opacity="0.59"/><rect x="469.2" y="86.6" width="6" height="1.9" opacity="0.60"/><rect x="469.2" y="28.9" width="6" height="2.0" opacity="0.77"/><rect x="469.2" y="31.9" width="6" height="1.2" opacity="0.63"/><rect x="469.2" y="91.4" width="6" height="2.6" opacity="0.62"/><rect x="469.2" y="57.0" width="6" height="1.9" opacity="0.82"/><rect x="469.2" y="48.5" width="6" height="1.8" opacity="0.73"/><rect x="469.2" y="45.1" width="6" height="2.0" opacity="0.84"/><rect x="469.2" y="64.3" width="6" height="1.3" opacity="0.66"/><rect x="469.2" y="69.1" width="6" height="1.6" opacity="0.67"/><rect x="469.2" y="68.3" width="6" height="1.9" opacity="0.58"/><rect x="469.2" y="91.0" width="6" height="1.3" opacity="0.91"/><rect x="469.2" y="219.2" width="6" height="2.2" opacity="0.75"/><rect x="469.2" y="229.9" width="6" height="2.3" opacity="0.90"/><rect x="469.2" y="226.8" width="6" height="1.3" opacity="0.59"/><rect x="469.2" y="245.9" width="6" height="2.3" opacity="0.84"/><rect x="469.2" y="229.2" width="6" height="1.8" opacity="0.81"/><rect x="469.2" y="235.3" width="6" height="2.8" opacity="0.57"/><rect x="469.2" y="227.7" width="6" height="2.4" opacity="0.91"/><rect x="469.2" y="231.9" width="6" height="2.6" opacity="0.55"/><rect x="483.6" y="96.5" width="6" height="1.8" opacity="0.81"/><rect x="483.6" y="78.1" width="6" height="1.5" opacity="0.62"/><rect x="483.6" y="101.1" width="6" height="2.5" opacity="0.91"/><rect x="483.6" y="84.3" width="6" height="1.3" opacity="0.86"/><rect x="483.6" y="75.8" width="6" height="2.5" opacity="0.72"/><rect x="483.6" y="86.0" width="6" height="1.3" opacity="0.60"/><rect x="483.6" y="102.4" width="6" height="2.0" opacity="0.90"/><rect x="483.6" y="105.6" width="6" height="2.2" opacity="0.94"/><rect x="483.6" y="62.1" width="6" height="1.9" opacity="0.74"/><rect x="483.6" y="64.9" width="6" height="2.8" opacity="0.57"/><rect x="483.6" y="93.3" width="6" height="1.7" opacity="0.67"/><rect x="483.6" y="87.1" width="6" height="1.7" opacity="0.58"/><rect x="483.6" y="266.0" width="6" height="2.3" opacity="0.54"/><rect x="483.6" y="284.4" width="6" height="1.4" opacity="0.60"/><rect x="483.6" y="242.9" width="6" height="1.9" opacity="0.72"/><rect x="483.6" y="280.2" width="6" height="1.4" opacity="0.76"/><rect x="483.6" y="263.5" width="6" height="1.7" opacity="0.66"/><rect x="483.6" y="252.7" width="6" height="2.8" opacity="0.85"/><rect x="483.6" y="254.8" width="6" height="1.3" opacity="0.66"/><rect x="483.6" y="275.0" width="6" height="2.0" opacity="0.68"/><rect x="483.6" y="264.3" width="6" height="1.3" opacity="0.79"/><rect x="483.6" y="267.1" width="6" height="1.4" opacity="0.69"/><rect x="483.6" y="277.4" width="6" height="1.7" opacity="0.74"/><rect x="483.6" y="246.7" width="6" height="2.2" opacity="0.68"/><rect x="483.6" y="246.7" width="6" height="2.9" opacity="0.81"/></g>
<path d="M469.6 171 L475 171 Q476 178.6 481 179.6 L491 181 L499.6 182 L499.6 188 L469.6 188.4 Z" fill="#ff9c1c" filter="url(#b2)" opacity="0.75"/>
<ellipse cx="487" cy="192" rx="4.6" ry="3.6" fill="#f08a1c" filter="url(#b2)"/>
<ellipse cx="479" cy="189.5" rx="3.5" ry="1.8" fill="#e07a1c" filter="url(#b2)" opacity="0.8"/>
<ellipse cx="487" cy="197.5" rx="1.8" ry="3" fill="#c8581e" filter="url(#b2)" opacity="0.8"/>
<path d="M470.4 173 L474.4 173 Q475.2 179.6 479.5 180.6 L490 182 L498 183 Q499 184.8 498 186.6 L471.4 187 Q470.4 186.6 470.4 186 Z" fill="#fffbe4" filter="url(#b6)"/>
<rect x="471.6" y="184.4" width="3.2" height="1.3" fill="#e8a028" filter="url(#b5)" opacity="0.8"/>
<rect x="491" y="182.4" width="8" height="4.6" rx="2" fill="#ffcf48" filter="url(#b6)" opacity="0.75"/>
<rect x="477" y="180.2" width="14" height="1.6" fill="#ffc040" filter="url(#b5)" opacity="0.6"/>
<circle cx="486" cy="184.4" r="0.7" fill="#7a4a10"/><circle cx="487.6" cy="184.4" r="0.6" fill="#7a4a10"/><circle cx="485" cy="181.2" r="0.6" fill="#8a5a18"/>
<g filter="url(#b2)">
<rect x="145.6" y="161" width="3" height="26" rx="1.5" fill="#1c1684"/>
<ellipse cx="147" cy="171.6" rx="1.5" ry="5" fill="#8a1a98"/>
<rect x="147" y="186.6" width="6" height="1.6" fill="#181470"/>
<ellipse cx="156.3" cy="185.6" rx="2.4" ry="2.2" fill="#a01cae"/>
<ellipse cx="155.5" cy="195" rx="1.6" ry="2.0" fill="#1a1478"/>
<ellipse cx="147.5" cy="145.0" rx="1.5" ry="1.6" fill="#15125e"/><ellipse cx="146.8" cy="152.0" rx="1.5" ry="1.6" fill="#15125e"/><ellipse cx="147.0" cy="194.0" rx="1.5" ry="1.6" fill="#15125e"/><ellipse cx="146.9" cy="199.0" rx="1.5" ry="1.6" fill="#15125e"/><ellipse cx="147.4" cy="215.0" rx="1.5" ry="1.6" fill="#15125e"/><ellipse cx="146.9" cy="219.0" rx="1.5" ry="1.6" fill="#15125e"/><ellipse cx="147.2" cy="207.0" rx="1.5" ry="1.6" fill="#15125e"/>
<ellipse cx="217.7" cy="188.5" rx="2.2" ry="2.4" fill="#8a1ca6"/>
<ellipse cx="216" cy="183" rx="1.8" ry="1.4" fill="#1a1478"/>
<rect x="331.3" y="175" width="2.6" height="18" rx="1.3" fill="#17136a"/>
<rect x="351.8" y="178" width="3.2" height="29" rx="1.6" fill="#2c1488"/>
<ellipse cx="353.3" cy="183" rx="1.6" ry="3" fill="#5a1a98"/>
<ellipse cx="353.4" cy="187.6" rx="2.1" ry="3.6" fill="#ff9420"/>
<ellipse cx="353.1" cy="213.0" rx="1.5" ry="1.6" fill="#120f50"/><ellipse cx="353.4" cy="220.0" rx="1.5" ry="1.6" fill="#120f50"/><ellipse cx="353.2" cy="226.0" rx="1.5" ry="1.6" fill="#120f50"/>
<ellipse cx="401.3" cy="187.4" rx="2.4" ry="3.4" fill="#821c9e"/>
<rect x="398" y="189" width="2.4" height="9" rx="1.2" fill="#17136a"/>
<rect x="551.6" y="183" width="2.4" height="16" rx="1.2" fill="#17136a"/>
<ellipse cx="552.8" cy="190.3" rx="2.0" ry="2.6" fill="#a0249e"/>
<ellipse cx="453.7" cy="180" rx="1.5" ry="3.4" fill="#1a1478"/>
</g>
<rect x="35" y="205" width="27" height="1.8" fill="#1a1478" filter="url(#b1)"/>
<rect x="62" y="205.2" width="48" height="1.4" fill="#110e48" filter="url(#b1)"/>
<g fill="#110e70" filter="url(#b1)"><rect x="503" y="191.6" width="3" height="1.8" opacity="0.36"/><rect x="517" y="191.7" width="3" height="1.8" opacity="0.86"/><rect x="536" y="191.7" width="3" height="1.8" opacity="0.65"/><rect x="546" y="191.9" width="7" height="1.8" opacity="0.67"/><rect x="562" y="191.7" width="3" height="1.8" opacity="0.46"/><rect x="587" y="190.8" width="7" height="1.8" opacity="0.75"/><rect x="599" y="192.5" width="3" height="1.8" opacity="0.84"/><rect x="618" y="191.8" width="4" height="1.8" opacity="0.44"/><rect x="633" y="192.3" width="3" height="1.8" opacity="0.64"/><rect x="648" y="190.6" width="3" height="1.8" opacity="0.51"/><rect x="660" y="191.8" width="5" height="1.8" opacity="0.44"/><rect x="681" y="191.4" width="4" height="1.8" opacity="0.32"/><rect x="689" y="191.5" width="4" height="1.8" opacity="0.54"/><rect x="698" y="192.0" width="2" height="1.8" opacity="0.56"/><rect x="717" y="191.2" width="4" height="1.8" opacity="0.56"/><rect x="735" y="192.1" width="3" height="1.8" opacity="0.44"/><rect x="747" y="190.8" width="4" height="1.8" opacity="0.44"/><rect x="757" y="191.1" width="3" height="1.8" opacity="0.79"/><rect x="776" y="191.2" width="3" height="1.8" opacity="0.73"/><rect x="797" y="191.9" width="2" height="1.8" opacity="0.28"/><rect x="812" y="191.6" width="5" height="1.8" opacity="0.32"/></g>
<g fill="#0c0a50" filter="url(#b1)"><rect x="560" y="209.7" width="2" height="1.8" opacity="0.57"/><rect x="574" y="210.8" width="3" height="1.8" opacity="0.30"/><rect x="590" y="209.0" width="2" height="1.8" opacity="0.51"/><rect x="610" y="210.7" width="3" height="1.8" opacity="0.55"/><rect x="631" y="209.7" width="4" height="1.8" opacity="0.26"/><rect x="652" y="210.8" width="3" height="1.8" opacity="0.28"/><rect x="664" y="209.2" width="7" height="1.8" opacity="0.88"/><rect x="689" y="210.7" width="3" height="1.8" opacity="0.60"/><rect x="699" y="210.4" width="2" height="1.8" opacity="0.52"/><rect x="722" y="209.2" width="4" height="1.8" opacity="0.32"/><rect x="745" y="210.8" width="7" height="1.8" opacity="0.47"/><rect x="772" y="209.5" width="3" height="1.8" opacity="0.76"/><rect x="786" y="209.9" width="3" height="1.8" opacity="0.38"/><rect x="806" y="210.5" width="7" height="1.8" opacity="0.29"/></g>
<g fill="#0c0a50" filter="url(#b1)"><rect x="160" y="188.7" width="2" height="1.8" opacity="0.30"/><rect x="179" y="188.4" width="5" height="1.8" opacity="0.29"/><rect x="195" y="188.0" width="5" height="1.8" opacity="0.62"/><rect x="212" y="189.0" width="7" height="1.8" opacity="0.69"/><rect x="225" y="189.3" width="3" height="1.8" opacity="0.49"/><rect x="234" y="189.3" width="7" height="1.8" opacity="0.89"/><rect x="253" y="188.8" width="3" height="1.8" opacity="0.36"/><rect x="275" y="188.0" width="3" height="1.8" opacity="0.88"/><rect x="285" y="188.3" width="3" height="1.8" opacity="0.66"/><rect x="298" y="188.5" width="3" height="1.8" opacity="0.48"/><rect x="323" y="189.1" width="3" height="1.8" opacity="0.86"/></g>
</g>
<rect x="5" y="53" width="99" height="15" fill="url(#pal)"/>
<rect x="5" y="68" width="99" height="1" fill="#000"/>
<rect x="5" y="69" width="99" height="23" fill="#fff"/>
<g fill="#000"><rect x="8" y="69" width="1" height="4"/><rect x="12" y="69" width="1" height="4"/><rect x="17" y="69" width="1" height="4"/><rect x="21" y="69" width="1" height="4"/><rect x="26" y="69" width="1" height="7"/><rect x="30" y="69" width="1" height="4"/><rect x="35" y="69" width="1" height="4"/><rect x="39" y="69" width="1" height="4"/><rect x="44" y="69" width="1" height="4"/><rect x="48" y="69" width="1" height="10"/><rect x="52" y="69" width="1" height="4"/><rect x="57" y="69" width="1" height="4"/><rect x="61" y="69" width="1" height="4"/><rect x="66" y="69" width="1" height="4"/><rect x="70" y="69" width="1" height="7"/><rect x="75" y="69" width="1" height="4"/><rect x="79" y="69" width="1" height="4"/><rect x="84" y="69" width="1" height="4"/><rect x="88" y="69" width="1" height="4"/><rect x="92" y="69" width="1" height="10"/><rect x="97" y="69" width="1" height="4"/><rect x="101" y="69" width="1" height="4"/></g>
<g fill="#fff"><rect x="64" y="760" width="1" height="20"/><rect x="178" y="760" width="1" height="20"/><rect x="292" y="760" width="1" height="20"/><rect x="407" y="760" width="1" height="20"/><rect x="521" y="760" width="1" height="20"/><rect x="635" y="760" width="1" height="20"/><rect x="749" y="760" width="1" height="20"/></g>
<rect x="818" y="1" width="42" height="781" fill="#fff"/>
<g fill="#000"><rect x="818" y="2" width="11" height="1"/><rect x="818" y="10" width="8" height="1"/><rect x="818" y="17" width="8" height="1"/><rect x="818" y="25" width="8" height="1"/><rect x="818" y="33" width="8" height="1"/><rect x="818" y="41" width="8" height="1"/><rect x="818" y="49" width="8" height="1"/><rect x="818" y="56" width="8" height="1"/><rect x="818" y="64" width="8" height="1"/><rect x="818" y="72" width="8" height="1"/><rect x="818" y="80" width="26" height="1"/><rect x="818" y="88" width="8" height="1"/><rect x="818" y="96" width="8" height="1"/><rect x="818" y="103" width="8" height="1"/><rect x="818" y="111" width="8" height="1"/><rect x="818" y="119" width="8" height="1"/><rect x="818" y="127" width="8" height="1"/><rect x="818" y="135" width="8" height="1"/><rect x="818" y="142" width="8" height="1"/><rect x="818" y="150" width="8" height="1"/><rect x="818" y="158" width="11" height="1"/><rect x="818" y="166" width="8" height="1"/><rect x="818" y="174" width="8" height="1"/><rect x="818" y="181" width="8" height="1"/><rect x="818" y="189" width="8" height="1"/><rect x="818" y="197" width="8" height="1"/><rect x="818" y="205" width="8" height="1"/><rect x="818" y="213" width="8" height="1"/><rect x="818" y="220" width="8" height="1"/><rect x="818" y="228" width="8" height="1"/><rect x="818" y="236" width="26" height="1"/><rect x="818" y="244" width="8" height="1"/><rect x="818" y="252" width="8" height="1"/><rect x="818" y="260" width="8" height="1"/><rect x="818" y="267" width="8" height="1"/><rect x="818" y="275" width="8" height="1"/><rect x="818" y="283" width="8" height="1"/><rect x="818" y="291" width="8" height="1"/><rect x="818" y="299" width="8" height="1"/><rect x="818" y="306" width="8" height="1"/><rect x="818" y="314" width="11" height="1"/><rect x="818" y="322" width="8" height="1"/><rect x="818" y="330" width="8" height="1"/><rect x="818" y="338" width="8" height="1"/><rect x="818" y="345" width="8" height="1"/><rect x="818" y="353" width="8" height="1"/><rect x="818" y="361" width="8" height="1"/><rect x="818" y="369" width="8" height="1"/><rect x="818" y="377" width="8" height="1"/><rect x="818" y="384" width="8" height="1"/><rect x="818" y="392" width="26" height="1"/><rect x="818" y="400" width="8" height="1"/><rect x="818" y="408" width="8" height="1"/><rect x="818" y="416" width="8" height="1"/><rect x="818" y="424" width="8" height="1"/><rect x="818" y="431" width="8" height="1"/><rect x="818" y="439" width="8" height="1"/><rect x="818" y="447" width="8" height="1"/><rect x="818" y="455" width="8" height="1"/><rect x="818" y="463" width="8" height="1"/><rect x="818" y="470" width="11" height="1"/><rect x="818" y="478" width="8" height="1"/><rect x="818" y="486" width="8" height="1"/><rect x="818" y="494" width="8" height="1"/><rect x="818" y="502" width="8" height="1"/><rect x="818" y="509" width="8" height="1"/><rect x="818" y="517" width="8" height="1"/><rect x="818" y="525" width="8" height="1"/><rect x="818" y="533" width="8" height="1"/><rect x="818" y="541" width="8" height="1"/><rect x="818" y="548" width="26" height="1"/><rect x="818" y="556" width="8" height="1"/><rect x="818" y="564" width="8" height="1"/><rect x="818" y="572" width="8" height="1"/><rect x="818" y="580" width="8" height="1"/><rect x="818" y="588" width="8" height="1"/><rect x="818" y="595" width="8" height="1"/><rect x="818" y="603" width="8" height="1"/><rect x="818" y="611" width="8" height="1"/><rect x="818" y="619" width="8" height="1"/><rect x="818" y="627" width="11" height="1"/><rect x="818" y="634" width="8" height="1"/><rect x="818" y="642" width="8" height="1"/><rect x="818" y="650" width="8" height="1"/><rect x="818" y="658" width="8" height="1"/><rect x="818" y="666" width="8" height="1"/><rect x="818" y="673" width="8" height="1"/><rect x="818" y="681" width="8" height="1"/><rect x="818" y="689" width="8" height="1"/><rect x="818" y="697" width="8" height="1"/><rect x="818" y="705" width="26" height="1"/><rect x="818" y="712" width="8" height="1"/><rect x="818" y="720" width="8" height="1"/><rect x="818" y="728" width="8" height="1"/><rect x="818" y="736" width="8" height="1"/><rect x="818" y="744" width="8" height="1"/><rect x="818" y="752" width="8" height="1"/><rect x="818" y="759" width="8" height="1"/><rect x="818" y="767" width="8" height="1"/><rect x="818" y="775" width="8" height="1"/></g>
<path d="M823.5 5.5 L839.5 13.5 L839.5 770 L822.5 779" fill="none" stroke="#10108c" stroke-width="1.2"/>
<rect x="860" y="1" width="80" height="781" fill="#505050"/>
<rect x="860" y="1" width="80" height="1" fill="#000"/><rect x="860" y="2" width="80" height="1" fill="#9a9a9a"/><rect x="860" y="3" width="80" height="6" fill="#000"/>
<rect x="860" y="774" width="80" height="8" fill="#000"/>
<g fill="#000"><rect x="860" y="22" width="2.8" height="1"/><rect x="860" y="23" width="3.4" height="1"/><rect x="860" y="28" width="7.7" height="1"/><rect x="860" y="29" width="10.1" height="1"/><rect x="860" y="30" width="6.6" height="1"/><rect x="860" y="38" width="13.5" height="1"/><rect x="860" y="39" width="5.9" height="1"/><rect x="860" y="46" width="7.5" height="1"/><rect x="860" y="47" width="4.9" height="1"/><rect x="860" y="48" width="4.1" height="1"/><rect x="860" y="57" width="5.4" height="1"/><rect x="860" y="58" width="6.7" height="1"/><rect x="860" y="59" width="6.0" height="1"/><rect x="860" y="64" width="5.2" height="1"/><rect x="860" y="65" width="7.6" height="1"/><rect x="860" y="66" width="6.1" height="1"/><rect x="860" y="67" width="10.3" height="1"/><rect x="860" y="71" width="9.8" height="1"/><rect x="860" y="74" width="6.9" height="1"/><rect x="860" y="75" width="9.5" height="1"/><rect x="860" y="80" width="10.3" height="1"/><rect x="860" y="84" width="10.6" height="1"/><rect x="860" y="85" width="8.4" height="1"/><rect x="860" y="87" width="8.7" height="1"/><rect x="860" y="88" width="12.6" height="1"/><rect x="860" y="92" width="3.6" height="1"/><rect x="860" y="95" width="8.9" height="1"/><rect x="860" y="96" width="17.4" height="1"/><rect x="860" y="97" width="14.3" height="1"/><rect x="860" y="103" width="7.9" height="1"/><rect x="860" y="104" width="8.2" height="1"/><rect x="860" y="105" width="11.4" height="1"/><rect x="860" y="107" width="12.5" height="1"/><rect x="860" y="108" width="12.8" height="1"/><rect x="860" y="112" width="11.4" height="1"/><rect x="860" y="115" width="10.6" height="1"/><rect x="860" y="116" width="7.1" height="1"/><rect x="860" y="117" width="6.5" height="1"/><rect x="860" y="120" width="14.1" height="1"/><rect x="860" y="121" width="6.1" height="1"/><rect x="860" y="122" width="5.2" height="1"/><rect x="860" y="125" width="7.3" height="1"/><rect x="860" y="126" width="3.9" height="1"/><rect x="860" y="129" width="6.6" height="1"/><rect x="860" y="130" width="11.0" height="1"/><rect x="860" y="131" width="10.7" height="1"/><rect x="860" y="132" width="10.8" height="1"/><rect x="860" y="137" width="3.7" height="1"/><rect x="860" y="138" width="12.5" height="1"/><rect x="860" y="139" width="4.6" height="1"/><rect x="860" y="142" width="8.8" height="1"/><rect x="860" y="143" width="10.4" height="1"/><rect x="860" y="144" width="15.9" height="1"/><rect x="860" y="145" width="16.0" height="1"/><rect x="860" y="150" width="7.2" height="1"/><rect x="860" y="151" width="3.7" height="1"/><rect x="860" y="155" width="7.8" height="1"/><rect x="860" y="156" width="7.2" height="1"/><rect x="860" y="160" width="4.2" height="1"/><rect x="860" y="161" width="4.4" height="1"/><rect x="860" y="162" width="7.7" height="1"/><rect x="860" y="165" width="7.8" height="1"/><rect x="860" y="166" width="6.3" height="1"/><rect x="860" y="167" width="12.7" height="1"/><rect x="860" y="168" width="8.0" height="1"/><rect x="860" y="170" width="16.5" height="1"/><rect x="860" y="171" width="16.4" height="1"/><rect x="860" y="172" width="11.5" height="1"/><rect x="860" y="173" width="9.6" height="1"/><rect x="860" y="174" width="13.6" height="1"/><rect x="860" y="178" width="25.8" height="1"/><rect x="860" y="179" width="14.3" height="1"/><rect x="860" y="181" width="10.8" height="1"/><rect x="860" y="182" width="13.5" height="1"/><rect x="860" y="183" width="15.2" height="1"/><rect x="860" y="184" width="21.9" height="1"/><rect x="860" y="188" width="16.1" height="1"/><rect x="860" y="189" width="13.8" height="1"/><rect x="860" y="190" width="17.1" height="1"/><rect x="860" y="191" width="18.2" height="1"/><rect x="860" y="194" width="10.2" height="1"/><rect x="860" y="195" width="9.3" height="1"/><rect x="860" y="196" width="9.9" height="1"/><rect x="860" y="200" width="7.9" height="1"/><rect x="860" y="201" width="8.7" height="1"/><rect x="860" y="204" width="3.3" height="1"/><rect x="860" y="205" width="6.5" height="1"/><rect x="860" y="206" width="7.9" height="1"/><rect x="860" y="207" width="2.7" height="1"/><rect x="860" y="210" width="11.8" height="1"/><rect x="860" y="211" width="9.6" height="1"/><rect x="860" y="212" width="8.3" height="1"/><rect x="860" y="213" width="9.1" height="1"/><rect x="860" y="215" width="16.7" height="1"/><rect x="860" y="216" width="5.7" height="1"/><rect x="860" y="221" width="13.7" height="1"/><rect x="860" y="227" width="10.8" height="1"/><rect x="860" y="229" width="10.8" height="1"/><rect x="860" y="230" width="8.0" height="1"/><rect x="860" y="231" width="12.0" height="1"/><rect x="860" y="235" width="10.2" height="1"/><rect x="860" y="236" width="6.1" height="1"/><rect x="860" y="237" width="10.0" height="1"/><rect x="860" y="241" width="10.8" height="1"/><rect x="860" y="242" width="10.0" height="1"/><rect x="860" y="243" width="8.4" height="1"/><rect x="860" y="244" width="12.6" height="1"/><rect x="860" y="245" width="12.8" height="1"/><rect x="860" y="249" width="11.3" height="1"/><rect x="860" y="250" width="9.9" height="1"/><rect x="860" y="251" width="5.8" height="1"/><rect x="860" y="252" width="6.8" height="1"/><rect x="860" y="255" width="4.6" height="1"/><rect x="860" y="256" width="5.6" height="1"/><rect x="860" y="257" width="7.4" height="1"/><rect x="860" y="260" width="10.6" height="1"/><rect x="860" y="261" width="11.1" height="1"/><rect x="860" y="262" width="8.3" height="1"/><rect x="860" y="265" width="7.1" height="1"/><rect x="860" y="268" width="14.4" height="1"/><rect x="860" y="272" width="13.7" height="1"/><rect x="860" y="273" width="7.6" height="1"/><rect x="860" y="279" width="10.2" height="1"/><rect x="860" y="280" width="8.5" height="1"/><rect x="860" y="281" width="5.6" height="1"/><rect x="860" y="284" width="15.7" height="1"/><rect x="860" y="285" width="8.2" height="1"/><rect x="860" y="286" width="7.6" height="1"/><rect x="860" y="290" width="9.0" height="1"/><rect x="860" y="291" width="11.9" height="1"/><rect x="860" y="294" width="5.8" height="1"/><rect x="860" y="295" width="6.5" height="1"/><rect x="860" y="296" width="7.1" height="1"/><rect x="860" y="300" width="10.7" height="1"/><rect x="860" y="304" width="10.2" height="1"/><rect x="860" y="305" width="2.9" height="1"/><rect x="860" y="306" width="3.2" height="1"/><rect x="860" y="309" width="4.2" height="1"/><rect x="860" y="310" width="5.9" height="1"/><rect x="860" y="311" width="9.3" height="1"/><rect x="860" y="312" width="4.9" height="1"/><rect x="860" y="313" width="9.4" height="1"/><rect x="860" y="318" width="4.3" height="1"/><rect x="860" y="319" width="3.1" height="1"/><rect x="860" y="320" width="5.4" height="1"/><rect x="860" y="321" width="7.5" height="1"/><rect x="860" y="322" width="8.8" height="1"/><rect x="860" y="324" width="11.5" height="1"/><rect x="860" y="325" width="8.4" height="1"/><rect x="860" y="326" width="8.8" height="1"/><rect x="860" y="329" width="11.9" height="1"/><rect x="860" y="335" width="4.1" height="1"/><rect x="860" y="338" width="7.1" height="1"/><rect x="860" y="339" width="7.8" height="1"/><rect x="860" y="340" width="8.2" height="1"/><rect x="860" y="341" width="9.0" height="1"/><rect x="860" y="342" width="8.0" height="1"/><rect x="860" y="346" width="10.8" height="1"/><rect x="860" y="347" width="14.8" height="1"/><rect x="860" y="351" width="7.9" height="1"/><rect x="860" y="352" width="12.1" height="1"/><rect x="860" y="353" width="15.4" height="1"/><rect x="860" y="359" width="10.9" height="1"/><rect x="860" y="360" width="13.7" height="1"/><rect x="860" y="362" width="5.4" height="1"/><rect x="860" y="363" width="6.6" height="1"/><rect x="860" y="366" width="6.8" height="1"/><rect x="860" y="367" width="9.7" height="1"/><rect x="860" y="368" width="7.2" height="1"/><rect x="860" y="372" width="14.6" height="1"/><rect x="860" y="373" width="13.6" height="1"/><rect x="860" y="375" width="6.4" height="1"/><rect x="860" y="376" width="4.2" height="1"/><rect x="860" y="377" width="7.2" height="1"/><rect x="860" y="378" width="4.2" height="1"/><rect x="860" y="384" width="4.7" height="1"/><rect x="860" y="388" width="5.4" height="1"/><rect x="860" y="389" width="8.4" height="1"/><rect x="860" y="394" width="2.8" height="1"/><rect x="860" y="395" width="11.3" height="1"/><rect x="860" y="401" width="6.4" height="1"/><rect x="860" y="402" width="10.1" height="1"/><rect x="860" y="406" width="8.6" height="1"/><rect x="860" y="407" width="6.3" height="1"/><rect x="860" y="408" width="10.6" height="1"/><rect x="860" y="409" width="11.1" height="1"/><rect x="860" y="410" width="6.8" height="1"/><rect x="860" y="412" width="8.3" height="1"/><rect x="860" y="415" width="11.3" height="1"/><rect x="860" y="416" width="14.6" height="1"/><rect x="860" y="419" width="8.5" height="1"/><rect x="860" y="420" width="5.9" height="1"/><rect x="860" y="426" width="13.2" height="1"/><rect x="860" y="430" width="9.0" height="1"/><rect x="860" y="434" width="8.0" height="1"/><rect x="860" y="438" width="5.0" height="1"/><rect x="860" y="439" width="10.4" height="1"/><rect x="860" y="440" width="5.7" height="1"/><rect x="860" y="441" width="4.7" height="1"/><rect x="860" y="442" width="5.9" height="1"/><rect x="860" y="444" width="11.3" height="1"/><rect x="860" y="445" width="18.9" height="1"/><rect x="860" y="447" width="6.6" height="1"/><rect x="860" y="448" width="9.2" height="1"/><rect x="860" y="449" width="6.2" height="1"/><rect x="860" y="452" width="11.1" height="1"/><rect x="860" y="457" width="11.0" height="1"/><rect x="860" y="458" width="5.9" height="1"/><rect x="860" y="459" width="12.6" height="1"/><rect x="860" y="460" width="8.3" height="1"/><rect x="860" y="461" width="9.8" height="1"/><rect x="860" y="464" width="9.5" height="1"/><rect x="860" y="466" width="12.8" height="1"/><rect x="860" y="467" width="10.4" height="1"/><rect x="860" y="468" width="9.5" height="1"/><rect x="860" y="473" width="7.7" height="1"/><rect x="860" y="474" width="9.7" height="1"/><rect x="860" y="475" width="9.3" height="1"/><rect x="860" y="476" width="11.6" height="1"/><rect x="860" y="479" width="7.5" height="1"/><rect x="860" y="483" width="11.7" height="1"/><rect x="860" y="484" width="8.9" height="1"/><rect x="860" y="489" width="8.9" height="1"/><rect x="860" y="490" width="7.2" height="1"/><rect x="860" y="491" width="9.7" height="1"/><rect x="860" y="492" width="7.6" height="1"/><rect x="860" y="496" width="9.2" height="1"/><rect x="860" y="497" width="11.9" height="1"/><rect x="860" y="498" width="10.7" height="1"/><rect x="860" y="499" width="7.9" height="1"/><rect x="860" y="503" width="6.8" height="1"/><rect x="860" y="508" width="9.9" height="1"/><rect x="860" y="510" width="7.2" height="1"/><rect x="860" y="511" width="4.3" height="1"/><rect x="860" y="512" width="9.0" height="1"/><rect x="860" y="513" width="6.7" height="1"/><rect x="860" y="514" width="5.5" height="1"/><rect x="860" y="519" width="8.0" height="1"/><rect x="860" y="520" width="6.1" height="1"/><rect x="860" y="521" width="12.8" height="1"/><rect x="860" y="522" width="9.6" height="1"/><rect x="860" y="523" width="8.4" height="1"/><rect x="860" y="527" width="7.9" height="1"/><rect x="860" y="528" width="6.8" height="1"/><rect x="860" y="532" width="4.1" height="1"/><rect x="860" y="533" width="4.0" height="1"/><rect x="860" y="534" width="12.0" height="1"/><rect x="860" y="539" width="14.4" height="1"/><rect x="860" y="540" width="17.6" height="1"/><rect x="860" y="541" width="9.6" height="1"/><rect x="860" y="544" width="14.6" height="1"/><rect x="860" y="545" width="10.0" height="1"/><rect x="860" y="546" width="12.8" height="1"/><rect x="860" y="547" width="8.3" height="1"/><rect x="860" y="551" width="7.1" height="1"/><rect x="860" y="554" width="5.0" height="1"/><rect x="860" y="555" width="6.2" height="1"/><rect x="860" y="556" width="8.8" height="1"/><rect x="860" y="559" width="9.3" height="1"/><rect x="860" y="560" width="4.5" height="1"/><rect x="860" y="561" width="8.5" height="1"/><rect x="860" y="562" width="10.0" height="1"/><rect x="860" y="563" width="9.3" height="1"/><rect x="860" y="566" width="8.4" height="1"/><rect x="860" y="567" width="8.9" height="1"/><rect x="860" y="568" width="17.2" height="1"/><rect x="860" y="574" width="5.0" height="1"/><rect x="860" y="575" width="11.3" height="1"/><rect x="860" y="576" width="9.2" height="1"/><rect x="860" y="577" width="5.3" height="1"/><rect x="860" y="582" width="12.0" height="1"/><rect x="860" y="583" width="6.9" height="1"/><rect x="860" y="584" width="12.8" height="1"/><rect x="860" y="585" width="9.2" height="1"/><rect x="860" y="586" width="5.2" height="1"/><rect x="860" y="590" width="8.3" height="1"/><rect x="860" y="591" width="8.6" height="1"/><rect x="860" y="592" width="7.3" height="1"/><rect x="860" y="594" width="6.3" height="1"/><rect x="860" y="595" width="4.7" height="1"/><rect x="860" y="598" width="13.8" height="1"/><rect x="860" y="602" width="6.2" height="1"/><rect x="860" y="603" width="17.0" height="1"/><rect x="860" y="604" width="6.4" height="1"/><rect x="860" y="605" width="6.1" height="1"/><rect x="860" y="609" width="7.6" height="1"/><rect x="860" y="610" width="4.2" height="1"/><rect x="860" y="611" width="9.0" height="1"/><rect x="860" y="613" width="10.5" height="1"/><rect x="860" y="619" width="16.3" height="1"/><rect x="860" y="620" width="12.1" height="1"/><rect x="860" y="621" width="10.5" height="1"/><rect x="860" y="622" width="14.7" height="1"/><rect x="860" y="628" width="2.9" height="1"/><rect x="860" y="630" width="16.0" height="1"/><rect x="860" y="631" width="8.6" height="1"/><rect x="860" y="632" width="6.1" height="1"/><rect x="860" y="636" width="7.1" height="1"/><rect x="860" y="641" width="7.6" height="1"/><rect x="860" y="642" width="11.4" height="1"/><rect x="860" y="644" width="6.6" height="1"/><rect x="860" y="645" width="11.0" height="1"/><rect x="860" y="648" width="5.1" height="1"/><rect x="860" y="651" width="5.5" height="1"/><rect x="860" y="652" width="4.3" height="1"/><rect x="860" y="653" width="4.3" height="1"/><rect x="860" y="657" width="4.5" height="1"/><rect x="860" y="658" width="4.8" height="1"/><rect x="860" y="663" width="4.2" height="1"/><rect x="860" y="664" width="8.6" height="1"/><rect x="860" y="666" width="7.3" height="1"/><rect x="860" y="669" width="12.0" height="1"/><rect x="860" y="670" width="11.3" height="1"/><rect x="860" y="671" width="18.7" height="1"/><rect x="860" y="672" width="11.3" height="1"/><rect x="860" y="673" width="11.5" height="1"/><rect x="860" y="676" width="10.0" height="1"/><rect x="860" y="677" width="11.3" height="1"/><rect x="860" y="678" width="17.5" height="1"/><rect x="860" y="682" width="7.1" height="1"/><rect x="860" y="685" width="10.6" height="1"/><rect x="860" y="686" width="16.6" height="1"/><rect x="860" y="687" width="8.7" height="1"/><rect x="860" y="690" width="3.6" height="1"/><rect x="860" y="691" width="8.0" height="1"/><rect x="860" y="696" width="8.3" height="1"/><rect x="860" y="697" width="7.5" height="1"/><rect x="860" y="698" width="6.4" height="1"/><rect x="860" y="699" width="6.6" height="1"/><rect x="860" y="702" width="8.2" height="1"/><rect x="860" y="703" width="6.2" height="1"/><rect x="860" y="704" width="7.0" height="1"/><rect x="860" y="705" width="8.7" height="1"/><rect x="860" y="707" width="17.6" height="1"/><rect x="860" y="708" width="11.4" height="1"/><rect x="860" y="709" width="15.5" height="1"/><rect x="860" y="710" width="8.6" height="1"/><rect x="860" y="713" width="11.6" height="1"/><rect x="860" y="714" width="10.2" height="1"/><rect x="860" y="720" width="7.3" height="1"/><rect x="860" y="721" width="7.6" height="1"/><rect x="860" y="722" width="7.9" height="1"/><rect x="860" y="727" width="3.0" height="1"/><rect x="860" y="728" width="4.3" height="1"/><rect x="860" y="729" width="12.1" height="1"/><rect x="860" y="732" width="16.3" height="1"/><rect x="860" y="737" width="8.5" height="1"/><rect x="860" y="738" width="11.7" height="1"/><rect x="860" y="739" width="13.1" height="1"/><rect x="860" y="744" width="6.7" height="1"/><rect x="860" y="745" width="10.6" height="1"/><rect x="860" y="749" width="14.2" height="1"/><rect x="860" y="754" width="8.1" height="1"/><rect x="860" y="755" width="4.5" height="1"/><rect x="860" y="756" width="2.8" height="1"/><rect x="860" y="757" width="4.9" height="1"/><rect x="860" y="763" width="6.0" height="1"/><rect x="860" y="766" width="8.3" height="1"/><rect x="860" y="767" width="14.5" height="1"/><rect x="860" y="768" width="14.1" height="1"/><rect x="860" y="769" width="10.7" height="1"/><rect x="860" y="772" width="9.0" height="1"/></g>
<g fill="#8c8c8c"><rect x="860" y="80" width="80" height="1"/><rect x="860" y="158" width="80" height="1"/><rect x="860" y="236" width="80" height="1"/><rect x="860" y="314" width="80" height="1"/><rect x="860" y="392" width="80" height="1"/><rect x="860" y="470" width="80" height="1"/><rect x="860" y="548" width="80" height="1"/><rect x="860" y="627" width="80" height="1"/><rect x="860" y="705" width="80" height="1"/></g>
<path d="M861.0 3.0 L861.0 4.5 L861.1 5.5 L861.1 6.7 L861.1 8.4 L861.1 9.3 L861.2 11.0 L861.2 12.0 L861.2 13.0 L861.3 14.7 L861.3 16.2 L861.7 17.6 L862.2 18.6 L863.3 20.2 L865.1 21.4 L866.2 22.3 L866.7 23.5 L867.3 24.7 L867.9 26.5 L867.8 28.1 L867.0 29.1 L867.8 30.4 L868.1 31.6 L867.2 32.9 L867.5 34.6 L868.1 36.3 L868.0 37.2 L869.6 38.7 L868.2 39.7 L868.7 41.0 L867.6 42.1 L868.2 43.3 L868.3 44.4 L866.3 45.6 L867.0 47.1 L867.4 48.1 L867.8 49.1 L867.8 50.6 L866.7 52.1 L866.8 53.3 L866.0 55.0 L865.9 56.7 L866.5 57.8 L867.2 59.5 L868.2 60.8 L867.1 61.9 L867.9 63.2 L867.6 64.8 L866.8 66.0 L868.2 67.1 L867.9 68.6 L867.1 69.6 L867.5 71.2 L867.2 72.2 L866.7 73.9 L866.8 75.0 L868.3 76.5 L866.5 77.6 L866.9 78.7 L866.5 80.1 L866.6 81.3 L868.0 83.0 L868.7 84.0 L867.2 85.0 L868.3 86.8 L867.3 88.4 L867.9 89.4 L866.8 90.4 L866.3 91.7 L868.3 93.0 L867.6 94.5 L867.5 95.9 L867.9 97.0 L868.3 98.2 L867.5 100.0 L868.3 101.4 L867.0 102.6 L868.7 104.2 L868.2 105.8 L868.2 107.5 L867.6 108.9 L868.1 110.1 L867.6 111.1 L868.4 112.7 L867.2 114.2 L867.7 115.5 L867.6 116.9 L869.0 118.4 L868.3 119.5 L867.6 121.1 L869.1 122.4 L868.0 123.4 L868.7 124.4 L868.0 126.2 L868.2 127.2 L868.5 128.5 L868.4 129.9 L868.2 131.5 L869.5 132.8 L868.9 133.9 L869.3 135.2 L870.0 136.2 L867.7 137.4 L868.8 138.5 L868.9 139.4 L869.8 140.7 L868.8 141.9 L870.2 143.0 L869.9 144.8 L870.7 145.9 L869.3 147.1 L870.9 148.2 L870.7 149.8 L870.7 151.1 L872.0 152.2 L871.5 153.4 L872.5 155.1 L871.5 156.4 L871.5 157.8 L872.6 159.4 L872.8 161.1 L873.4 162.0 L873.3 162.9 L874.3 163.8 L874.2 164.7 L875.5 165.6 L876.0 166.5 L876.5 167.4 L877.0 168.3 L877.5 169.2 L878.2 170.1 L879.6 171.0 L881.0 171.9 L882.5 172.8 L883.9 173.7 L885.4 174.6 L887.6 175.5 L890.6 176.4 L893.6 177.3 L897.3 178.2 L903.4 179.1 L909.6 180.0 L913.1 180.9 L916.5 181.8 L920.0 182.7 L914.5 183.6 L907.9 184.5 L901.2 185.4 L895.7 186.3 L890.6 187.2 L885.2 188.1 L878.0 189.0 L878.8 189.9 L879.5 190.8 L880.3 191.7 L881.1 192.6 L879.8 193.5 L876.9 194.4 L874.0 195.3 L872.6 196.2 L872.0 197.1 L871.3 198.0 L870.7 198.9 L870.1 199.8 L870.4 200.7 L869.6 201.8 L870.0 203.2 L870.7 204.4 L869.5 205.8 L869.4 207.0 L869.5 208.3 L870.0 209.6 L871.3 211.0 L872.1 212.3 L871.7 213.3 L870.6 214.6 L870.9 216.1 L869.5 217.3 L868.0 219.1 L869.1 220.5 L868.7 221.5 L869.1 223.0 L869.2 224.2 L867.9 225.5 L866.7 227.3 L868.2 228.8 L868.8 230.0 L867.8 231.2 L868.6 232.6 L867.7 233.7 L868.0 235.0 L867.3 236.6 L867.5 238.3 L867.2 239.6 L869.0 241.0 L868.5 242.5 L867.2 243.7 L867.9 244.8 L868.4 246.3 L868.3 247.2 L867.8 248.9 L867.1 249.9 L866.8 250.8 L867.9 252.5 L868.3 254.0 L867.8 255.7 L867.9 257.2 L867.8 258.7 L866.8 260.2 L867.4 261.7 L866.5 263.3 L866.3 264.4 L868.6 266.0 L867.1 267.5 L868.2 269.1 L866.9 270.5 L867.3 271.7 L867.3 272.9 L868.6 274.3 L867.6 275.3 L866.5 276.2 L867.7 277.9 L867.3 279.6 L867.2 280.5 L868.6 281.9 L867.4 283.7 L866.4 285.0 L866.7 286.5 L866.2 287.5 L867.9 288.4 L868.7 289.4 L868.4 290.4 L866.2 291.4 L866.8 293.0 L866.6 294.5 L868.1 295.5 L868.4 297.0 L866.3 298.6 L868.0 300.0 L868.5 301.3 L868.6 302.5 L866.1 304.0 L867.8 304.9 L866.3 306.6 L868.0 307.7 L868.3 308.8 L866.3 310.1 L867.6 311.4 L867.9 312.7 L868.2 313.7 L867.8 314.9 L867.2 316.4 L868.1 317.6 L868.1 319.4 L866.8 320.8 L868.6 321.7 L868.2 323.3 L867.7 324.5 L868.2 326.3 L866.9 327.7 L868.4 329.0 L867.9 330.2 L868.4 331.7 L866.8 333.3 L866.7 334.2 L867.6 335.5 L868.4 337.1 L868.2 338.0 L868.3 339.7 L866.8 341.1 L868.1 342.8 L868.4 344.3 L866.3 345.5 L868.1 346.9 L868.0 348.0 L866.6 349.7 L867.8 351.1 L866.6 352.5 L868.0 353.6 L867.2 355.2 L868.1 356.2 L866.6 357.8 L868.4 359.2 L867.4 360.9 L867.5 362.2 L866.5 363.3 L867.8 364.4 L867.5 365.6 L867.3 366.8 L866.1 367.9 L867.0 369.7 L867.6 370.7 L866.4 372.3 L866.9 373.7 L866.0 375.1 L868.6 376.0 L867.2 377.7 L866.7 379.1 L867.1 380.7 L868.0 382.5 L868.5 384.1 L866.1 385.2 L866.4 386.3 L866.1 387.3 L868.2 388.7 L868.4 390.0 L866.1 391.7 L867.0 393.2 L868.4 394.2 L867.4 395.3 L868.4 396.8 L867.0 398.3 L866.4 399.6 L868.5 401.3 L866.0 402.4 L866.9 403.6 L868.3 405.3 L866.1 406.9 L867.8 408.5 L868.5 410.0 L866.3 411.0 L868.4 412.6 L866.7 414.1 L867.9 415.5 L866.8 416.5 L866.2 417.6 L866.3 419.0 L866.3 420.1 L865.9 421.6 L866.4 423.1 L868.3 424.1 L868.3 425.2 L868.2 426.8 L867.1 427.9 L868.3 428.9 L867.5 430.5 L866.8 431.8 L867.1 433.5 L866.3 434.9 L866.0 436.0 L867.3 437.6 L868.1 438.6 L866.9 439.7 L866.6 440.8 L866.7 442.4 L867.1 443.5 L868.2 444.7 L868.4 445.7 L868.2 446.6 L866.4 448.1 L866.6 449.5 L866.4 450.6 L868.4 451.8 L868.3 453.6 L866.6 454.6 L866.0 456.3 L866.6 457.9 L865.9 459.6 L866.7 461.3 L865.8 462.3 L867.2 463.9 L867.0 465.0 L866.4 466.7 L866.2 468.1 L867.8 469.2 L866.3 470.7 L866.0 471.7 L867.1 473.2 L866.3 474.3 L867.6 475.8 L867.3 477.4 L866.0 478.5 L866.9 480.0 L865.9 481.6 L866.7 483.2 L868.0 484.9 L865.8 486.2 L867.0 487.9 L866.5 489.6 L867.9 490.7 L866.2 491.9 L867.3 493.2 L867.1 494.1 L867.1 495.4 L867.6 496.4 L868.0 498.0 L867.6 499.2 L867.7 500.4 L868.0 501.4 L867.0 503.1 L867.1 504.5 L865.8 505.9 L866.3 507.7 L866.0 508.7 L867.9 509.9 L866.0 510.8 L866.2 512.3 L867.3 513.2 L867.1 514.6 L866.0 516.2 L867.6 517.9 L866.0 518.8 L867.0 520.1 L866.0 521.3 L866.1 522.6 L868.0 524.0 L867.2 525.0 L866.1 526.6 L868.1 528.2 L866.8 529.5 L867.1 531.1 L868.1 532.4 L866.6 534.0 L866.6 535.1 L868.2 536.4 L868.1 538.0 L867.9 539.7 L867.0 540.6 L868.1 542.4 L866.8 543.5 L866.6 545.0 L865.9 546.4 L867.0 547.6 L866.0 548.6 L867.7 550.3 L867.3 552.1 L868.0 553.7 L865.7 555.4 L866.3 556.9 L866.4 558.4 L868.1 559.8 L866.3 561.2 L866.8 562.6 L866.4 564.4 L867.3 565.5 L867.2 566.5 L867.0 568.3 L866.8 569.4 L866.0 570.8 L866.0 571.8 L866.7 573.0 L866.3 574.2 L867.0 575.1 L867.2 576.8 L867.3 578.2 L867.5 579.3 L867.0 580.6 L866.8 582.1 L866.2 583.2 L866.9 584.3 L867.1 585.6 L866.5 586.5 L866.2 588.2 L866.9 589.6 L868.2 590.7 L867.6 591.9 L865.8 592.9 L866.7 594.6 L866.6 595.6 L867.5 596.9 L866.2 597.9 L867.5 599.6 L866.5 600.7 L867.3 601.9 L867.8 603.3 L866.9 605.0 L867.5 606.5 L866.8 608.1 L867.4 609.7 L865.9 611.5 L865.6 613.1 L867.1 614.7 L868.1 616.1 L866.6 617.5 L867.8 619.1 L866.5 620.5 L866.7 621.9 L866.3 623.4 L867.0 624.7 L866.4 625.9 L867.7 627.5 L866.7 628.9 L866.3 629.9 L867.0 631.0 L865.7 632.4 L866.4 634.1 L867.7 635.8 L866.0 637.5 L867.9 638.8 L865.6 639.7 L866.8 641.1 L867.5 642.9 L868.1 644.2 L866.8 645.6 L866.5 647.1 L867.0 648.3 L868.0 649.6 L866.9 651.1 L866.5 652.1 L866.9 653.3 L867.8 654.7 L866.7 656.5 L867.1 657.8 L866.4 659.6 L867.6 661.0 L866.3 662.0 L867.6 663.8 L865.7 665.2 L867.2 666.9 L868.0 668.5 L866.5 670.2 L866.2 671.3 L866.8 672.6 L865.9 673.7 L867.0 675.2 L868.0 676.4 L865.5 677.8 L867.5 679.1 L867.2 680.3 L866.2 681.2 L867.0 682.9 L865.9 684.4 L866.9 685.7 L867.1 686.8 L868.0 688.2 L866.5 689.6 L865.8 690.6 L865.7 692.2 L865.9 693.2 L867.5 694.6 L867.5 696.0 L865.4 697.0 L866.2 698.6 L866.3 700.1 L866.1 701.2 L867.7 702.2 L866.3 703.6 L866.4 704.9 L867.7 705.9 L867.9 707.3 L867.0 708.6 L865.5 709.7 L867.6 711.4 L867.7 712.6 L866.2 714.3 L867.9 715.7 L867.8 717.0 L866.4 718.2 L865.9 719.7 L867.6 720.9 L867.4 722.2 L865.8 723.3 L865.8 724.6 L866.1 726.3 L865.6 727.7 L866.3 729.1 L865.5 730.4 L867.5 731.4 L866.0 732.6 L866.1 733.7 L865.4 734.8 L866.2 736.3 L867.2 737.3 L866.0 738.3 L865.7 740.0 L867.5 741.3 L865.7 742.9 L867.2 744.1 L867.8 745.4 L867.8 746.4 L865.9 747.8 L865.6 749.1 L866.0 750.6 L866.8 752.3 L865.7 753.6 L865.4 755.0 L864.9 756.7 L865.7 758.1 L866.2 759.2 L865.3 760.5 L864.9 761.9 L864.4 763.1 L864.6 764.2 L864.1 765.4 L863.8 766.4 L863.4 767.6 L862.8 768.8 L862.5 769.9 L862.5 771.0 L861.9 772.1 L861.6 773.8 L860.8 775.0" fill="none" stroke="#c03030" stroke-width="1.35" stroke-linejoin="round"/>
<path d="M861.0 9.0 L864.8 10.5 L868.5 12.0 L872.7 13.5 L876.1 15.0 L876.3 16.5 L876.5 18.0 L877.1 19.5 L877.6 21.0 L878.3 22.5 L879.3 24.0 L880.6 25.5 L882.5 27.0 L884.4 28.5 L882.8 30.0 L883.9 31.5 L888.8 32.8 L885.3 34.1 L883.0 35.6 L884.5 37.1 L883.4 38.0 L887.8 39.1 L886.3 40.0 L884.9 41.3 L882.9 42.6 L883.8 43.4 L885.2 44.8 L886.1 45.8 L884.3 47.0 L886.8 48.4 L886.0 49.4 L887.8 50.6 L884.0 52.0 L882.9 53.6 L887.0 54.7 L885.2 55.7 L886.3 56.5 L885.7 57.9 L884.0 59.4 L885.7 60.8 L884.8 62.0 L887.9 63.5 L886.0 64.7 L886.3 65.5 L888.1 66.8 L883.5 68.3 L885.9 69.4 L884.6 70.2 L882.3 71.2 L886.5 72.0 L883.1 72.9 L887.1 74.0 L884.3 74.9 L887.1 76.1 L886.9 77.6 L884.0 78.6 L887.0 79.7 L882.6 81.3 L883.3 82.2 L885.2 83.2 L884.1 84.5 L885.3 85.3 L886.5 86.4 L887.7 87.9 L887.5 89.1 L885.7 90.5 L888.4 92.0 L888.9 93.5 L887.9 94.6 L888.9 95.5 L887.3 96.3 L887.9 97.3 L887.8 98.4 L888.4 99.2 L889.3 100.1 L891.2 100.9 L889.3 102.2 L890.3 103.2 L889.9 104.3 L893.2 105.8 L891.9 106.9 L891.0 107.8 L891.9 108.9 L892.1 110.3 L895.2 111.1 L893.5 112.4 L893.9 113.6 L897.8 114.8 L897.9 116.3 L897.5 117.3 L899.4 118.3 L900.2 119.5 L899.2 120.5 L902.7 122.0 L903.2 123.5 L904.0 124.9 L904.0 125.9 L903.3 127.0 L904.7 127.8 L906.5 128.8 L906.6 130.4 L908.2 131.9 L908.0 133.5 L908.2 134.5 L908.7 135.4 L910.4 136.7 L910.5 138.2 L911.6 139.5 L911.8 140.4 L912.8 141.9 L913.0 143.3 L913.9 144.3 L914.5 145.3 L914.6 146.9 L916.1 148.0 L915.5 149.4 L915.9 150.3 L917.8 151.8 L918.3 152.8 L918.8 154.3 L919.2 155.4 L918.8 156.3 L920.6 157.9 L921.7 159.1 L922.2 160.3 L921.9 161.7 L922.5 162.7 L924.0 163.7 L924.9 164.7 L926.8 165.6 L927.3 166.7 L929.5 168.0 L930.9 169.1 L931.7 170.3 L932.3 171.6 L935.2 172.7 L938.1 173.5 L939.7 174.4 L941.0 175.0" fill="none" stroke="#2ce02c" stroke-width="1.25" stroke-linejoin="round"/>
<path d="M941.0 187.3 L931.8 188.7 L924.5 190.1 L924.0 191.5 L923.4 192.9 L920.6 194.3 L909.4 195.7 L907.0 197.1 L910.3 198.5 L908.3 199.9 L906.2 201.3 L904.3 202.7 L902.7 204.1 L901.0 205.5 L898.0 206.9 L899.1 208.3 L899.9 209.7 L900.8 211.1 L900.2 212.5 L898.2 213.9 L896.8 215.3 L896.5 216.7 L898.6 218.1 L899.3 219.5 L899.6 220.9 L896.6 222.3 L892.2 223.7 L892.3 225.1 L896.3 226.5 L894.5 227.9 L891.5 229.3 L889.8 230.7 L888.8 232.1 L886.5 233.5 L887.9 234.9 L889.3 236.3 L892.3 237.7 L894.3 239.1 L896.3 240.5 L892.4 241.9 L891.1 243.3 L888.6 244.7 L885.2 246.1 L885.9 247.5 L885.2 248.9 L882.9 250.3 L883.6 251.7 L881.7 253.1 L881.0 254.5 L882.9 255.9 L883.7 257.3 L883.4 258.7 L884.5 260.1 L884.4 261.5 L882.9 262.9 L882.6 263.9 L880.1 265.2 L883.1 266.5 L882.2 267.3 L883.3 268.6 L886.8 269.4 L886.6 270.9 L881.2 271.8 L885.1 272.6 L880.2 273.6 L886.1 274.7 L881.2 276.2 L886.2 277.1 L884.5 278.4 L879.6 279.2 L882.4 280.6 L886.3 281.5 L885.3 282.8 L885.7 283.6 L885.8 284.5 L881.8 285.6 L886.2 286.9 L880.2 287.9 L881.0 289.1 L880.4 290.0 L880.7 290.9 L881.5 291.9 L881.4 293.3 L880.6 294.5 L879.3 295.6 L879.3 296.6 L883.4 298.0 L882.8 298.9 L880.0 300.5 L882.5 301.9 L885.5 303.1 L883.1 304.2 L886.7 305.6 L885.5 306.7 L884.0 308.0 L881.8 309.2 L880.2 310.0 L884.8 310.9 L880.4 311.9 L885.6 312.7 L884.3 314.2 L881.0 315.2 L882.7 316.3 L882.6 317.2 L886.5 318.2 L883.4 319.8 L886.5 320.8 L881.9 321.8 L882.1 322.6 L883.0 323.8 L883.0 324.8 L881.1 325.6 L882.2 326.5 L879.3 327.3 L880.9 328.3 L883.1 329.6 L884.1 331.0 L885.7 332.4 L881.5 333.5 L880.1 335.1 L883.9 336.5 L885.3 337.3 L883.7 338.8 L885.1 340.2 L882.9 341.1 L885.3 342.3 L885.2 343.7 L885.7 345.0 L884.1 346.4 L879.1 347.3 L881.6 348.3 L885.2 349.1 L883.6 350.4 L884.0 351.7 L878.8 352.9 L884.5 354.3 L882.8 355.5 L879.2 356.8 L880.6 358.2 L880.7 359.1 L880.3 360.5 L886.1 361.9 L881.6 363.1 L883.8 364.2 L883.3 365.7 L879.2 367.0 L880.5 367.9 L880.9 369.3 L878.7 370.5 L880.6 371.4 L883.8 372.7 L880.7 374.1 L882.0 375.3 L879.4 376.5 L880.0 378.0 L885.6 379.5 L881.9 380.4 L885.8 381.8 L880.5 383.0 L885.6 383.9 L882.8 384.9 L882.4 385.8 L879.4 387.4 L882.2 388.8 L883.7 390.4 L885.1 391.3 L878.5 392.5 L882.0 393.3 L880.6 394.5 L880.9 395.4 L884.6 396.5 L883.9 397.3 L879.1 398.7 L883.6 400.3 L880.4 401.8 L881.2 402.9 L882.7 404.5 L881.4 405.6 L878.5 406.6 L884.5 407.5 L885.3 408.5 L880.2 409.5 L879.6 410.7 L885.4 411.8 L884.3 413.3 L885.1 414.6 L882.3 416.2 L878.5 417.6 L881.5 418.9 L883.0 420.3 L878.5 421.4 L879.1 422.9 L880.7 424.1 L883.7 425.1 L880.1 426.7 L880.4 428.0 L881.1 429.3 L879.3 430.2 L885.0 431.2 L879.7 432.4 L885.6 433.9 L879.1 435.1 L878.7 436.0 L878.7 437.1 L880.0 438.1 L884.8 439.3 L881.2 440.7 L882.0 441.9 L880.6 443.0 L880.1 443.8 L879.0 445.4 L882.8 446.6 L879.6 448.1 L879.9 449.1 L881.4 450.2 L884.4 451.8 L878.1 453.3 L883.4 454.1 L881.6 455.6 L878.0 456.9 L885.0 458.0 L884.5 459.5 L879.8 461.1 L879.1 461.9 L883.1 463.2 L883.4 464.7 L883.7 466.0 L882.1 467.2 L883.9 468.0 L884.9 469.0 L880.2 470.3 L879.8 471.2 L883.2 472.5 L878.4 473.4 L882.3 474.6 L879.6 475.8 L878.0 477.0 L881.4 478.1 L882.8 479.6 L881.5 481.2 L879.7 482.1 L883.2 483.7 L878.0 484.8 L883.0 486.0 L879.8 487.1 L884.9 488.4 L878.1 489.4 L881.0 490.5 L879.3 491.8 L883.4 493.3 L879.4 494.5 L880.2 496.0 L879.5 497.5 L883.6 498.5 L885.0 499.5 L879.2 500.7 L880.9 501.7 L885.0 503.0 L880.8 503.9 L885.2 504.9 L878.2 505.8 L880.7 506.7 L884.5 508.2 L885.3 509.6 L880.2 511.1 L884.8 512.1 L878.0 513.5 L880.6 514.8 L880.2 515.9 L877.7 516.8 L880.4 517.9 L878.6 519.4 L879.3 521.0 L883.9 522.1 L881.0 523.5 L881.3 524.4 L884.7 525.5 L880.4 526.4 L877.9 527.9 L883.8 529.1 L878.0 530.5 L878.1 531.3 L879.6 532.8 L884.5 534.2 L879.7 535.3 L882.3 536.9 L883.1 537.9 L879.7 538.9 L883.4 539.7 L882.4 541.3 L877.8 542.8 L881.2 543.8 L884.9 545.4 L879.5 546.5 L881.3 547.6 L879.0 549.2 L883.2 550.6 L883.4 552.1 L880.1 553.4 L880.3 554.4 L878.2 555.9 L883.3 556.8 L878.0 557.8 L881.8 558.6 L885.0 559.7 L885.0 561.2 L878.2 562.2 L881.3 563.1 L880.9 564.5 L880.7 565.4 L882.6 566.7 L884.0 568.1 L878.4 569.5 L879.7 570.9 L880.3 572.2 L879.0 573.6 L879.4 574.6 L884.2 575.5 L880.0 576.8 L885.0 577.9 L879.2 579.1 L882.4 580.5 L878.2 582.1 L883.7 583.3 L884.4 584.8 L879.7 585.6 L878.9 586.5 L881.9 588.1 L880.3 589.6 L880.8 591.1 L883.3 592.1 L878.2 593.7 L882.1 595.0 L880.2 595.9 L879.0 596.9 L882.0 597.9 L878.9 599.2 L879.9 600.0 L878.8 601.3 L878.9 602.4 L881.5 603.8 L878.1 604.7 L881.6 605.8 L878.1 607.1 L882.6 608.0 L879.5 609.2 L884.6 610.2 L881.7 611.3 L880.5 612.3 L884.9 613.8 L878.8 614.9 L878.9 616.3 L884.2 617.1 L883.6 618.2 L884.0 619.4 L878.5 620.5 L881.5 621.4 L884.2 622.7 L882.0 623.5 L881.1 624.6 L879.4 625.6 L884.3 626.8 L881.0 627.7 L884.6 629.1 L878.2 630.1 L884.7 631.6 L877.7 632.8 L880.2 634.3 L882.0 635.9 L878.5 637.3 L878.9 638.7 L883.7 639.9 L878.6 641.3 L880.3 642.3 L880.1 643.5 L879.1 644.4 L884.0 645.8 L881.5 646.6 L877.5 648.0 L878.1 649.5 L881.4 650.8 L879.5 652.1 L881.6 653.2 L882.2 654.4 L880.5 655.5 L881.9 656.3 L879.0 657.5 L883.1 658.9 L878.6 660.1 L878.0 661.3 L880.5 662.2 L880.6 663.1 L877.5 664.3 L877.8 665.6 L883.1 667.0 L877.6 668.2 L880.1 669.4 L878.2 670.9 L884.8 672.4 L883.4 673.8 L884.7 674.8 L884.5 676.0 L878.5 677.5 L884.3 678.9 L879.9 679.8 L878.4 681.2 L879.3 682.7 L878.3 684.2 L884.2 685.4 L879.2 686.3 L879.6 687.5 L878.6 688.4 L884.3 689.3 L884.0 690.6 L883.2 691.6 L881.2 692.5 L879.9 693.8 L881.4 695.3 L883.9 696.5 L884.7 697.4 L880.2 698.7 L879.2 700.2 L881.6 701.7 L883.0 702.8 L878.5 704.0 L877.6 705.4 L879.1 706.8 L884.7 708.2 L882.2 709.4 L877.2 710.5 L878.3 711.3 L880.5 712.6 L884.0 713.8 L878.9 714.7 L877.4 716.0 L879.9 716.8 L879.9 717.7 L881.6 718.7 L878.8 720.0 L880.8 721.3 L884.3 722.2 L878.3 723.2 L882.1 724.0 L883.1 725.5 L879.2 726.7 L882.1 727.5 L879.9 728.7 L880.6 730.0 L882.8 731.6 L884.1 732.6 L881.2 733.4 L879.0 734.6 L883.1 735.4 L881.4 736.2 L878.3 737.8 L881.8 738.7 L882.1 739.9 L878.5 741.4 L879.5 742.4 L884.0 743.3 L882.6 744.7 L883.6 745.5 L880.7 746.9 L880.6 748.3 L878.0 749.3 L877.5 750.2 L882.9 751.3 L883.6 752.7 L879.2 754.0 L881.0 755.3 L881.7 756.7 L882.3 757.7 L882.2 759.3 L882.5 760.8 L883.3 761.8 L884.0 763.2 L881.3 764.6 L879.5 766.1 L879.3 767.1 L877.5 768.4 L876.6 769.7 L875.2 770.9 L873.9 772.3 L871.7 773.4 L868.5 774.7 L867.1 775.6 L865.8 776.5 L862.6 777.4 L863.2 778.3 L861.1 779.4 L860.3 780.2 L860.5 781.0" fill="none" stroke="#2ce02c" stroke-width="1.25" stroke-linejoin="round"/>
<path d="M940.5 778.3 Q937.2 779 936.6 782" fill="none" stroke="#28c828" stroke-width="1.2"/>
<circle cx="924.3" cy="298.2" r="2.6" fill="#000" stroke="#c01818" stroke-width="1.1"/>
</svg>
<div class="hdr"><div style="top:2px">Screen Capture Time: 2025-12-14 21:22:56 UTC</div><div style="top:16px">143048017 Hz</div><div style="top:30px">Config = V8</div></div>
<div class="sc" style="left:5px;top:81px">-80 dB -60</div><div class="sc" style="left:84px;top:81px">-40</div>
<div class="fl" style="left:858.2px;top:48.3px">143050400</div>
<div class="fl" style="left:858.2px;top:204.3px">143050200</div>
<div class="fl" style="left:858.2px;top:360.3px">143050000</div>
<div class="fl" style="left:858.2px;top:516.3px">143049800</div>
<div class="fl" style="left:858.2px;top:662.9px">143049600 Hz</div>
<div class="tl" style="left:51.7px;top:779px">2025-12-14 21:21:50</div>
<div class="tl" style="left:165.7px;top:779px">2025-12-14 21:22:00</div>
<div class="tl" style="left:279.7px;top:779px">2025-12-14 21:22:10</div>
<div class="tl" style="left:394.7px;top:779px">2025-12-14 21:22:20</div>
<div class="tl" style="left:508.7px;top:779px">2025-12-14 21:22:30</div>
<div class="tl" style="left:622.7px;top:779px">2025-12-14 21:22:40</div>
<div class="tl" style="left:736.7px;top:779px">2025-12-14 21:22:50</div>
</div></body></html>
